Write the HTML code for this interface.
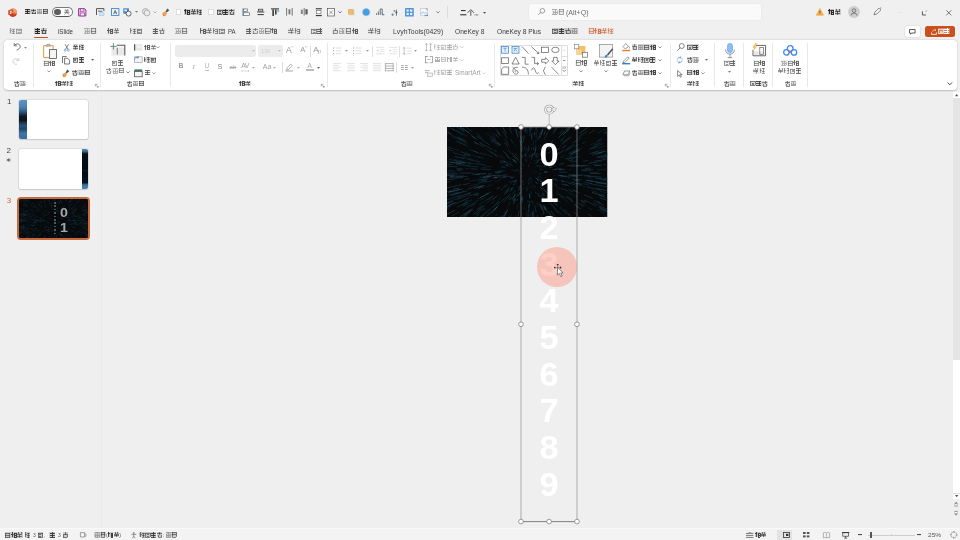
<!DOCTYPE html>
<html lang="zh-CN"><head><meta charset="utf-8"><title>PowerPoint</title>
<style>
html,body{margin:0;padding:0}
html{background:#f0f0f0;width:960px;height:540px;overflow:hidden}
body{width:960px;height:540px;overflow:hidden;position:relative;background:#f0f0f0;font-family:"Liberation Sans",sans-serif;font-size:6.5px;color:#3a3a3a}
div,span,svg,i{box-sizing:border-box}
.t{position:absolute;white-space:nowrap;line-height:1;display:block}
.ic{position:absolute;display:block;overflow:visible}
text{font-family:"Liberation Sans",sans-serif}
.bl{filter:blur(.4px)}
.vl{position:absolute;width:1px}
.k{display:inline-block;width:.94em;height:.94em;margin-right:.06em;vertical-align:-.12em;opacity:.82;background-repeat:no-repeat}
.k{background-color:rgba(60,60,60,.09)}
.bd .k{opacity:1;background-color:rgba(40,40,40,.2)}
.wh .k{background-color:rgba(255,255,255,.3)}
.g .k{background-color:rgba(120,120,120,.08)}
.or .k{background-color:rgba(201,88,31,.15)}
.g{color:#9a9a9a}
.lb{color:#383838}
.lb .k{opacity:.95;background-color:rgba(40,40,40,.16)}
.k.a{background-image:linear-gradient(currentColor,currentColor),linear-gradient(currentColor,currentColor),linear-gradient(currentColor,currentColor),linear-gradient(currentColor,currentColor);background-position:0.05em 0.1em,0.05em 0.44em,0.05em 0.8em,0.41em 0.05em;background-size:0.82em 0.15em,0.82em 0.15em,0.82em 0.15em,0.15em 0.85em}.k.b{background-image:linear-gradient(currentColor,currentColor),linear-gradient(currentColor,currentColor),linear-gradient(currentColor,currentColor),linear-gradient(currentColor,currentColor),linear-gradient(currentColor,currentColor);background-position:0.08em 0.08em,0.08em 0.78em,0.08em 0.08em,0.74em 0.08em,0.08em 0.42em;background-size:0.76em 0.1em,0.76em 0.1em,0.1em 0.8em,0.1em 0.8em,0.76em 0.1em}.k.c{background-image:linear-gradient(currentColor,currentColor),linear-gradient(currentColor,currentColor),linear-gradient(currentColor,currentColor),linear-gradient(currentColor,currentColor),linear-gradient(currentColor,currentColor),linear-gradient(currentColor,currentColor);background-position:0.05em 0.05em,0.05em 0.3em,0.45em 0.1em,0.45em 0.45em,0.45em 0.8em,0.62em 0.1em;background-size:0.1em 0.85em,0.3em 0.1em,0.45em 0.1em,0.45em 0.1em,0.45em 0.1em,0.1em 0.8em}.k.d{background-image:linear-gradient(currentColor,currentColor),linear-gradient(currentColor,currentColor),linear-gradient(currentColor,currentColor),linear-gradient(currentColor,currentColor),linear-gradient(currentColor,currentColor);background-position:0.05em 0.25em,0.42em 0.02em,0.15em 0.5em,0.7em 0.5em,0.15em 0.82em;background-size:0.85em 0.1em,0.1em 0.5em,0.1em 0.4em,0.1em 0.4em,0.65em 0.1em}.k.e{background-image:linear-gradient(currentColor,currentColor),linear-gradient(currentColor,currentColor),linear-gradient(currentColor,currentColor),linear-gradient(currentColor,currentColor),linear-gradient(currentColor,currentColor),linear-gradient(currentColor,currentColor),linear-gradient(currentColor,currentColor);background-position:0.12em 0.05em,0em 0.25em,0.5em 0.1em,0.5em 0.1em,0.78em 0.1em,0.5em 0.45em,0.5em 0.78em;background-size:0.15em 0.85em,0.42em 0.15em,0.42em 0.15em,0.15em 0.8em,0.15em 0.8em,0.42em 0.15em,0.42em 0.15em}.k.f{background-image:linear-gradient(currentColor,currentColor),linear-gradient(currentColor,currentColor),linear-gradient(currentColor,currentColor),linear-gradient(currentColor,currentColor),linear-gradient(currentColor,currentColor),linear-gradient(currentColor,currentColor);background-position:0.05em 0.15em,0.05em 0.15em,0.3em 0.4em,0.3em 0.62em,0.8em 0.15em,0.05em 0.8em;background-size:0.85em 0.1em,0.1em 0.7em,0.4em 0.1em,0.4em 0.1em,0.1em 0.7em,0.85em 0.1em}.k.g{background-image:linear-gradient(currentColor,currentColor),linear-gradient(currentColor,currentColor),linear-gradient(currentColor,currentColor),linear-gradient(currentColor,currentColor),linear-gradient(currentColor,currentColor),linear-gradient(currentColor,currentColor);background-position:0.05em 0.08em,0.42em 0.08em,0.1em 0.35em,0.72em 0.35em,0.1em 0.5em,0.05em 0.8em;background-size:0.85em 0.15em,0.15em 0.85em,0.15em 0.5em,0.15em 0.5em,0.77em 0.15em,0.85em 0.15em}.k.h{background-image:linear-gradient(currentColor,currentColor),linear-gradient(currentColor,currentColor),linear-gradient(currentColor,currentColor),linear-gradient(currentColor,currentColor),linear-gradient(currentColor,currentColor);background-position:0.05em 0.3em,0.25em 0.05em,0.62em 0.05em,0.05em 0.6em,0.42em 0.3em;background-size:0.85em 0.1em,0.1em 0.4em,0.1em 0.4em,0.85em 0.1em,0.1em 0.6em}
#titlebar{position:absolute;left:0;top:0;width:960px;height:24px}
#tabs{position:absolute;left:0;top:24px;width:960px;height:15px}
#ribbon{font-size:6.05px;position:absolute;left:4px;top:39.5px;width:952.5px;height:50.5px;background:#fff;border-radius:4px;box-shadow:0 .5px 2px rgba(0,0,0,.22)}
#thumbs{position:absolute;left:0;top:92px;width:101px;height:436px;background:#efefef}
#canvas{position:absolute;left:101px;top:92px;width:852px;height:436px;background:#efefef;overflow:hidden}
#vscroll{position:absolute;left:953px;top:92px;width:7px;height:436px;background:#efefef}
#status{position:absolute;left:0;top:528px;width:960px;height:12px;background:#f3f3f3;box-shadow:inset 0 1px 0 #f9f9f9;overflow:hidden}
</style></head><body>
<div id="titlebar" class="bl"><svg class="ic" style="left:7.5px;top:7.5px" width="9" height="9" viewBox="0 0 9 9" ><circle cx="5" cy="4.5" r="4" fill="#e8703f"/><path d="M5 .5A4 4 0 0 1 9 4.5H5Z" fill="#f5a27c"/><path d="M1.2 6.2A4 4 0 0 0 8.8 6.2Z" fill="#c43e1c"/><rect x=".3" y="2" width="5" height="5" rx=".8" fill="#c9421d"/><path d="M2 3.1H3.2A1 1 0 0 1 3.2 5.1H2.6V6M2.3 3.1V6" stroke="#fff" stroke-width=".7" fill="none"/></svg><span class="t bd" style="left:25.0px;top:8.6px;font-size:5.9px;color:#222" title="自动保存"><i class="k a"></i><i class="k d"></i><i class="k g"></i><i class="k b"></i></span><div style="position:absolute;left:52.0px;top:7.0px;width:20.5px;height:9.6px;border:.6px solid #7a7a7a;border-bottom-color:#555;border-radius:5px;background:#fdfdfd"><div style="position:absolute;left:1.4px;top:1px;width:6.4px;height:6.4px;border-radius:50%;background:#5e5e5e"></div></div><svg class="ic" style="left:63.8px;top:9.0px" width="5.6" height="5.8" viewBox="0 0 5.6 5.8" role="img" aria-label="关"><path d="M1.6 .2L2.2 1.4M4 .2L3.4 1.4M.6 1.8H5M.2 3.4H5.4M2.8 1.8V3.4L.6 5.6M2.8 3.4L5.2 5.6" fill="none" stroke="#444" stroke-width=".6"/></svg><svg class="ic" style="left:78.0px;top:8.0px" width="8.5" height="8.5" viewBox="0 0 8.5 8.5" ><path d="M.6 .6H6.6L7.9 1.9V7.9H.6Z" fill="#efc8ef" stroke="#8e3a94" stroke-width="1"/><rect x="2.3" y=".8" width="3.6" height="2.4" fill="#fbeefb" stroke="#8e3a94" stroke-width=".7"/><rect x="2.2" y="5" width="4.2" height="2.9" fill="#fbeefb" stroke="#8e3a94" stroke-width=".7"/></svg><svg class="ic" style="left:96.0px;top:8.4px" width="8.5" height="8" viewBox="0 0 8.5 8" ><path d="M.5 7V.6H7.9V3" fill="none" stroke="#444" stroke-width=".9"/><path d="M2 3.2H6.4" stroke="#444" stroke-width=".8"/><rect x="3.4" y="4.6" width="4.6" height="3" rx=".6" fill="#cfe6f8" stroke="#7fb5e2" stroke-width=".5"/></svg><svg class="ic" style="left:111.0px;top:8.2px" width="8.5" height="8" viewBox="0 0 8.5 8" ><rect x=".5" y=".6" width="7.4" height="6.8" fill="#eef6fc" stroke="#3c86c8" stroke-width=".9"/><path d="M2.6 6L4.2 2.3L5.8 6M3.2 4.8H5.2" stroke="#444" stroke-width=".7" fill="none"/></svg><svg class="ic" style="left:122.7px;top:8.0px" width="8.6" height="8.6" viewBox="0 0 8.6 8.6" ><rect x=".3" y=".3" width="5.6" height="5.4" fill="#3f86cf"/><rect x="1.4" y="1.4" width="2.6" height="2" fill="#dcebf8"/><circle cx="5.6" cy="5.6" r="2.5" fill="#f4f4f4" stroke="#444" stroke-width=".8"/></svg><svg class="ic" style="left:134.5px;top:11.4px" width="3" height="1.8" viewBox="0 0 3 1.8" ><path d="M0 0H3L1.5 1.8Z" fill="#777"/></svg><svg class="ic" style="left:142.0px;top:8.0px" width="8.5" height="8.5" viewBox="0 0 8.5 8.5" ><circle cx="3.4" cy="3.4" r="2.9" fill="#e4e4e4" stroke="#9a9a9a" stroke-width=".7"/><circle cx="5" cy="5" r="2.9" fill="#ececec" stroke="#9a9a9a" stroke-width=".7"/></svg><svg class="ic" style="left:152.5px;top:11.0px" width="4" height="2.6" viewBox="0 0 4 2.6" ><path d="M.4 .4 L2 2 L3.6 .4" fill="none" stroke="#999" stroke-width=".7"/></svg><svg class="ic" style="left:162.3px;top:7.8px" width="8" height="8.6" viewBox="0 0 8 8.6" ><path d="M5.4 .4L7.4 2.2L4.6 4.6L3.4 3.4Z" fill="#555"/><path d="M.3 5L3.2 3.4L5 5.2L3.4 8.2Z" fill="#f0a050"/><path d="M.3 5L3.4 8.2L1.2 8Z" fill="#e07a28"/></svg><div style="position:absolute;left:175.6px;top:8.8px;width:5.6px;height:6.2px;background:#fff;border:.5px solid #dcdcdc"></div><span class="t bd" style="left:184.3px;top:8.9px;font-size:6px;color:#222" title="对齐状"><i class="k e"></i><i class="k h"></i><i class="k c"></i></span><div style="position:absolute;left:208.0px;top:8.8px;width:5.6px;height:6.2px;background:#fff;border:.5px solid #dcdcdc"></div><span class="t bd" style="left:217.0px;top:8.9px;font-size:6px;color:#222" title="参考线"><i class="k f"></i><i class="k a"></i><i class="k d"></i></span><svg class="ic" style="left:242.0px;top:8.0px" width="8" height="8.5" viewBox="0 0 8 8.5" ><path d="M.7 .4V8.2" stroke="#5b9bd5" stroke-width=".8"/><rect x="1.6" y="1" width="4" height="2.6" fill="#fff" stroke="#444" stroke-width=".6"/><rect x="1.6" y="4.8" width="5.8" height="2.6" fill="#fff" stroke="#444" stroke-width=".6"/></svg><svg class="ic" style="left:257.0px;top:8.4px" width="7.4" height="8" viewBox="0 0 7.4 8" ><path d="M0 4H7.4" stroke="#333" stroke-width=".9"/><rect x="1.6" y="1.2" width="4.2" height="1.8" fill="none" stroke="#333" stroke-width=".7"/><path d="M.6 6.6H6.8" stroke="#333" stroke-width="1"/></svg><svg class="ic" style="left:270.6px;top:7.8px" width="8.6" height="8.6" viewBox="0 0 8.6 8.6" ><path d="M0 .9H8" stroke="#333" stroke-width="1.1"/><rect x="1.3" y="1.6" width="1.7" height="6.4" fill="#444"/><rect x="4" y="1.6" width="1.6" height="5" fill="#444"/><path d="M7.2 1.8V4.2M6.2 3H8.2" stroke="#4a90d9" stroke-width=".7"/></svg><svg class="ic" style="left:285.6px;top:8.4px" width="7" height="7.6" viewBox="0 0 7 7.6" ><path d="M.6 0V7.6M6.2 0V7.6" stroke="#555" stroke-width=".8"/><rect x="2.5" y="1.3" width="1.9" height="5" fill="#777"/></svg><svg class="ic" style="left:300.0px;top:8.4px" width="8.4" height="7.6" viewBox="0 0 8.4 7.6" ><path d="M4.2 0V7.6" stroke="#555" stroke-width=".8"/><rect x=".8" y="1.6" width="2" height="4.4" fill="#888"/><rect x="5.4" y="1.2" width="2.2" height="5.2" fill="#555"/></svg><svg class="ic" style="left:315.0px;top:8.0px" width="7.6" height="8.4" viewBox="0 0 7.6 8.4" ><path d="M.8 .8H6.8" stroke="#333" stroke-width="1.1"/><path d="M.8 7.6H6.8" stroke="#333" stroke-width="1.1"/><rect x="1.6" y="2.6" width="4.4" height="3.2" fill="#fff" stroke="#666" stroke-width=".6"/></svg><svg class="ic" style="left:327.0px;top:8.0px" width="8" height="8.4" viewBox="0 0 8 8.4" ><rect x=".4" y=".4" width="7.2" height="7.6" fill="#fafafa" stroke="#555" stroke-width=".7"/><path d="M2.2 6.4L5.8 2.4M2.6 2.8L5.6 6.2" stroke="#666" stroke-width=".6"/></svg><svg class="ic" style="left:337.6px;top:11.0px" width="4" height="2.6" viewBox="0 0 4 2.6" ><path d="M.4 .4 L2 2 L3.6 .4" fill="none" stroke="#444" stroke-width=".7"/></svg><svg class="ic" style="left:348.0px;top:9.0px" width="6.6" height="6.4" viewBox="0 0 6.6 6.4" ><rect x="1" y="1" width="5.4" height="5.2" fill="#c9ccd0"/><rect x="0" y="0" width="5.6" height="5.4" fill="#f0b869"/></svg><svg class="ic" style="left:362.0px;top:8.0px" width="8.4" height="8.4" viewBox="0 0 8.4 8.4" ><circle cx="4.2" cy="4.2" r="3.6" fill="#4a9be0" stroke="#8cc0ee" stroke-width=".8" stroke-dasharray="1 .6"/></svg><svg class="ic" style="left:375.6px;top:8.0px" width="8.6" height="8.4" viewBox="0 0 8.6 8.4" ><path d="M.6 7V5.2M2.4 7V3.4M4.2 7V1H6.2V6.6H8.2" fill="none" stroke="#555" stroke-width=".8"/><path d="M6.2 4V6.8H8.2" fill="none" stroke="#4a90d9" stroke-width=".8"/></svg><svg class="ic" style="left:391.0px;top:8.6px" width="7" height="7.4" viewBox="0 0 7 7.4" ><circle cx="1.6" cy="5.6" r="1.1" fill="#3f7fc4"/><circle cx="3.4" cy="2" r="1" fill="#e07a5a"/><path d="M5.4 .6V6.8" stroke="#3f7fc4" stroke-width=".9"/><circle cx="5.4" cy="3.6" r="1" fill="#555"/></svg><svg class="ic" style="left:405.0px;top:8.0px" width="8.8" height="8.6" viewBox="0 0 8.8 8.6" ><rect width="8.8" height="8.6" rx=".5" fill="#4e94d8"/><rect x="1.5" y="1.5" width="2.3" height="2.2" fill="#e8f1fb"/><rect x="5" y="1.5" width="2.3" height="2.2" fill="#e8f1fb"/><rect x="1.5" y="4.9" width="2.3" height="2.2" fill="#e8f1fb"/><rect x="5" y="4.9" width="2.3" height="2.2" fill="#e8f1fb"/></svg><svg class="ic" style="left:420.0px;top:8.0px" width="8.4" height="8.4" viewBox="0 0 8.4 8.4" ><rect x=".4" y=".6" width="7" height="6.6" fill="#f6f8fa" stroke="#b8c2cc" stroke-width=".6"/><path d="M1 6L3 3.8L4.6 5.4L5.8 4.4L7 5.6" fill="none" stroke="#7aa7d6" stroke-width=".7"/><path d="M5.6 .9H7.1V2.4" fill="none" stroke="#e8834a" stroke-width=".8"/><path d="M4.6 7.6H8M6.8 6.4L8 7.6" fill="none" stroke="#3f7fc4" stroke-width=".8"/></svg><svg class="ic" style="left:436.0px;top:11.4px" width="4" height="2.6" viewBox="0 0 4 2.6" ><path d="M.4 .4 L2 2 L3.6 .4" fill="none" stroke="#555" stroke-width=".7"/></svg><div class="vl" style="left:447.3px;top:6.0px;height:11.5px;background:#dcdcdc"></div><svg class="ic" style="left:460.0px;top:8.6px" width="19" height="7" viewBox="0 0 19 7" role="img" aria-label="二个..."><path d="M1 1.6H5.6M.2 5.8H6.4" stroke="#222" stroke-width="1"/><path d="M7.6 3.8L10.8 .6L14 3.8M10.8 2V6.8" fill="none" stroke="#444" stroke-width=".9"/><path d="M14.6 5.9H15.4M16 5.9H16.8M17.4 5.9H18.2" stroke="#333" stroke-width=".9"/></svg><svg class="ic" style="left:482.7px;top:11.8px" width="3" height="1.8" viewBox="0 0 3 1.8" ><path d="M0 0H3L1.5 1.8Z" fill="#444"/></svg><div style="position:absolute;left:529.0px;top:4.0px;width:232.0px;height:16.0px;background:#fafafa;border-radius:2.5px;box-shadow:0 0 0 .5px #e6e6e6"></div><svg class="ic" style="left:538.2px;top:8.4px" width="7.2" height="7.2" viewBox="0 0 7.2 7.2" ><circle cx="4.4" cy="2.8" r="2.3" fill="none" stroke="#777" stroke-width=".7"/><path d="M2.8 4.4L.4 6.8" stroke="#777" stroke-width=".8"/></svg><span class="t " style="left:552.0px;top:8.8px;font-size:6.4px;color:#666" title="搜索"><i class="k g"></i><i class="k b"></i></span><svg class="ic" style="left:565.8px;top:8.5px" width="23.5" height="8.5"><text x="0" y="5.85" textLength="22.5" lengthAdjust="spacingAndGlyphs" font-size="6.8" font-weight="normal" fill="#6a6a6a" >(Alt+Q)</text></svg><svg class="ic" style="left:815.6px;top:8.0px" width="7.8" height="7.8" viewBox="0 0 7.8 7.8" ><path d="M3.9 .5L7.5 7.2H.3Z" fill="#f6b44b" stroke="#e8922a" stroke-width=".5"/><path d="M3.9 2.8V5M3.9 5.7V6.4" stroke="#5a3a10" stroke-width=".8"/></svg><span class="t bd" style="left:828.3px;top:8.9px;font-size:6.4px;color:#222" title="登录"><i class="k e"></i><i class="k h"></i></span><svg class="ic" style="left:848.0px;top:6.2px" width="12" height="12" viewBox="0 0 12 12" ><circle cx="6" cy="6" r="5.9" fill="#cdcdcd"/><circle cx="6" cy="4.6" r="1.8" fill="none" stroke="#5a5a5a" stroke-width=".7"/><path d="M2.8 9.6A3.3 3.3 0 0 1 9.2 9.6" fill="none" stroke="#5a5a5a" stroke-width=".7"/></svg><svg class="ic" style="left:873.0px;top:7.4px" width="9" height="9" viewBox="0 0 9 9" ><path d="M1 7.8L2 5L6 1.2L7.8 3L3.8 7Z" fill="#fbfbfb" stroke="#555" stroke-width=".7"/><path d="M7.6 .4V1.8M6.9 1.1H8.3" stroke="#4a90d9" stroke-width=".5"/></svg><svg class="ic" style="left:897.5px;top:11.6px" width="5" height="1" viewBox="0 0 5 1" ><path d="M0 .5H5" stroke="#e6e6e6" stroke-width=".8"/></svg><svg class="ic" style="left:921.6px;top:9.8px" width="5.4" height="5.4" viewBox="0 0 5.4 5.4" ><path d="M.4 1.4V5H4" fill="none" stroke="#333" stroke-width=".8"/><path d="M3.6 1.8L5 .4" stroke="#555" stroke-width=".6"/></svg><svg class="ic" style="left:945.8px;top:9.6px" width="5.6" height="5.6" viewBox="0 0 5.6 5.6" ><path d="M.3 .3L5.3 5.3M5.3 .3L.3 5.3" stroke="#444" stroke-width=".7"/></svg></div>
<div id="tabs" class="bl"><span class="t " style="left:9.3px;top:3.9px;font-size:6.5px;color:#666" title="文件"><i class="k c"></i><i class="k f"></i></span><span class="t bd" style="left:34.2px;top:3.9px;font-size:6.5px;color:#222" title="开始"><i class="k a"></i><i class="k d"></i></span><div style="position:absolute;left:33.6px;top:12.6px;width:14.2px;height:1.1px;background:#c9501c;border-radius:.5px"></div><svg class="ic" style="left:58.0px;top:3.7px" width="16.0" height="8.8"><text x="0" y="6.02" textLength="15.0" lengthAdjust="spacingAndGlyphs" font-size="7" font-weight="normal" fill="#333" >iSlide</text></svg><span class="t " style="left:84.0px;top:3.9px;font-size:6.5px" title="插入"><i class="k g"></i><i class="k b"></i></span><span class="t " style="left:106.8px;top:3.9px;font-size:6.5px" title="绘图"><i class="k e"></i><i class="k h"></i></span><span class="t " style="left:129.8px;top:3.9px;font-size:6.5px" title="设计"><i class="k c"></i><i class="k f"></i></span><span class="t " style="left:152.3px;top:3.9px;font-size:6.5px" title="切换"><i class="k a"></i><i class="k d"></i></span><span class="t " style="left:175.0px;top:3.9px;font-size:6.5px" title="动画"><i class="k g"></i><i class="k b"></i></span><span class="t " style="left:199.6px;top:3.9px;font-size:6.5px" title="口袋动画"><i class="k e"></i><i class="k h"></i><i class="k c"></i><i class="k f"></i></span><svg class="ic" style="left:227.6px;top:3.7px" width="8.6" height="8.8"><text x="0" y="6.02" textLength="7.6" lengthAdjust="spacingAndGlyphs" font-size="7" font-weight="normal" fill="#3a3a3a" >PA</text></svg><span class="t " style="left:246.0px;top:3.9px;font-size:6.3px" title="幻灯片放映"><i class="k a"></i><i class="k d"></i><i class="k g"></i><i class="k b"></i><i class="k e"></i></span><span class="t " style="left:288.0px;top:3.9px;font-size:6.5px" title="审阅"><i class="k h"></i><i class="k c"></i></span><span class="t " style="left:310.6px;top:3.9px;font-size:6.5px" title="视图"><i class="k f"></i><i class="k a"></i></span><span class="t " style="left:332.3px;top:3.9px;font-size:6.5px" title="开发工具"><i class="k d"></i><i class="k g"></i><i class="k b"></i><i class="k e"></i></span><span class="t " style="left:368.0px;top:3.9px;font-size:6.5px" title="帮助"><i class="k h"></i><i class="k c"></i></span><svg class="ic" style="left:392.8px;top:3.7px" width="51.2" height="8.8"><text x="0" y="6.02" textLength="50.2" lengthAdjust="spacingAndGlyphs" font-size="7" font-weight="normal" fill="#3a3a3a" >LvyhTools(0429)</text></svg><svg class="ic" style="left:455.3px;top:3.7px" width="30.4" height="8.8"><text x="0" y="6.02" textLength="29.4" lengthAdjust="spacingAndGlyphs" font-size="7" font-weight="normal" fill="#3a3a3a" >OneKey 8</text></svg><svg class="ic" style="left:496.7px;top:3.7px" width="45.1" height="8.8"><text x="0" y="6.02" textLength="44.1" lengthAdjust="spacingAndGlyphs" font-size="7" font-weight="normal" fill="#3a3a3a" >OneKey 8 Plus</text></svg><span class="t bd" style="left:552.0px;top:3.9px;font-size:6.5px" title="百度网盘"><i class="k f"></i><i class="k a"></i><i class="k d"></i><i class="k g"></i></span><span class="t or" style="left:588.0px;top:3.9px;font-size:6.5px;color:#c9581f" title="图片格式"><i class="k b"></i><i class="k e"></i><i class="k h"></i><i class="k c"></i></span><div style="position:absolute;left:905.0px;top:1.8px;width:15.4px;height:11.4px;background:#fff;border-radius:2px;box-shadow:0 0 0 .5px #d8d8d8"></div><svg class="ic" style="left:909.3px;top:4.6px" width="6.6" height="6" viewBox="0 0 6.6 6" ><path d="M.5 .5H6.1V4H2.6L1.6 5.2V4H.5Z" fill="none" stroke="#333" stroke-width=".8"/></svg><div style="position:absolute;left:925.0px;top:1.8px;width:30.0px;height:11.6px;background:#c9501c;border-radius:2.5px"></div><svg class="ic" style="left:930.6px;top:4.8px" width="6" height="6" viewBox="0 0 6 6" ><path d="M.6 3.4V5.4H5.4V3.4" fill="none" stroke="#fff" stroke-width=".8"/><path d="M1.4 2.6C2 1.2 3.4 .8 4.6 1M3.8 .2L4.8 1L4 2" fill="none" stroke="#fff" stroke-width=".6"/></svg><span class="t bd wh" style="left:937.6px;top:4.1px;font-size:6.5px;color:#fff" title="共享"><i class="k f"></i><i class="k a"></i></span></div>
<div id="ribbon" class="bl"><svg class="ic" style="left:9.0px;top:2.9px" width="8.4" height="8.6" viewBox="0 0 8.4 8.6" ><path d="M1.2 1V3.8H4" fill="none" stroke="#555" stroke-width=".8"/><path d="M1.4 3.6C3 1 7.2 1.6 7.2 4.6C7.2 6.6 5.4 7.2 3.6 8.2" fill="none" stroke="#555" stroke-width=".8"/></svg><svg class="ic" style="left:19.9px;top:7.1px" width="3" height="1.8" viewBox="0 0 3 1.8" ><path d="M0 0H3L1.5 1.8Z" fill="#888"/></svg><svg class="ic" style="left:8.4px;top:17.1px" width="8" height="8" viewBox="0 0 8 8" ><path d="M6.8 1V3.6H4.2" fill="none" stroke="#bbb" stroke-width=".7"/><path d="M6.6 3.4C5.4 1 1 1.4 1 4.4C1 6.8 3.2 7.6 5 7.2" fill="none" stroke="#bbb" stroke-width=".7"/></svg><span class="t lb" style="left:10.0px;top:41.0px;font-size:6.1px" title="撤销"><i class="k d"></i><i class="k g"></i></span><div class="vl" style="left:28.7px;top:3.5px;height:44.0px;background:#e8e8e8"></div><svg class="ic" style="left:39.0px;top:4.9px" width="14" height="15.6" viewBox="0 0 14 15.6" ><rect x=".6" y="1.6" width="9.6" height="12" rx=".8" fill="#fff" stroke="#e8a44a" stroke-width="1.1"/><path d="M3.2 1.8C3.2 -.2 7.6 -.2 7.6 1.8" fill="none" stroke="#777" stroke-width=".8"/><rect x="3" y="1.4" width="4.8" height="1.4" fill="#ddd" stroke="#999" stroke-width=".4"/><rect x="6.6" y="5.6" width="6.8" height="9" fill="#f4f4f4" stroke="#555" stroke-width=".8"/></svg><span class="t " style="left:39.2px;top:20.9px;" title="粘贴"><i class="k b"></i><i class="k e"></i></span><svg class="ic" style="left:43.4px;top:30.5px" width="4" height="2.6" viewBox="0 0 4 2.6" ><path d="M.4 .4 L2 2 L3.6 .4" fill="none" stroke="#777" stroke-width=".7"/></svg><svg class="ic" style="left:60.0px;top:4.3px" width="5.6" height="7.6" viewBox="0 0 5.6 7.6" ><path d="M1 .2L4 5.2M4.6 .2L1.6 5.2" stroke="#555" stroke-width=".7"/><circle cx="1.2" cy="6.2" r="1" fill="none" stroke="#3f7fc4" stroke-width=".6"/><circle cx="4.4" cy="6.2" r="1" fill="none" stroke="#3f7fc4" stroke-width=".6"/></svg><span class="t bd" style="left:68.6px;top:4.8px;" title="剪切"><i class="k h"></i><i class="k c"></i></span><svg class="ic" style="left:58.0px;top:16.5px" width="8.4" height="8.4" viewBox="0 0 8.4 8.4" ><path d="M.5 7V.5H4.6" fill="none" stroke="#555" stroke-width=".8"/><path d="M2.6 2.2H5.6L7.6 4.2V8H2.6Z" fill="#fff" stroke="#555" stroke-width=".8"/></svg><span class="t bd" style="left:68.6px;top:17.2px;" title="复制"><i class="k f"></i><i class="k a"></i></span><svg class="ic" style="left:86.7px;top:19.9px" width="3" height="1.8" viewBox="0 0 3 1.8" ><path d="M0 0H3L1.5 1.8Z" fill="#555"/></svg><svg class="ic" style="left:58.4px;top:29.1px" width="8" height="8.6" viewBox="0 0 8 8.6" ><path d="M5.4 .4L7.4 2.2L4.6 4.6L3.4 3.4Z" fill="#555"/><path d="M.3 5L3.2 3.4L5 5.2L3.4 8.2Z" fill="#f0a050"/><path d="M.3 5L3.4 8.2L1.2 8Z" fill="#e07a28"/></svg><span class="t bd" style="left:68.2px;top:30.1px;" title="格式刷"><i class="k d"></i><i class="k g"></i><i class="k b"></i></span><span class="t lb" style="left:51.0px;top:41.0px;font-size:6.1px" title="剪贴板"><i class="k e"></i><i class="k h"></i><i class="k c"></i></span><svg class="ic" style="left:90.8px;top:44.5px" width="3.6" height="3.6" viewBox="0 0 3.6 3.6" ><path d="M.3 2.4V.3H2.4" fill="none" stroke="#777" stroke-width=".6"/><path d="M1.4 1.4L3.2 3.2M3.2 1.8V3.2H1.8" fill="none" stroke="#777" stroke-width=".6"/></svg><div class="vl" style="left:96.2px;top:3.5px;height:44.0px;background:#e8e8e8"></div><svg class="ic" style="left:105.8px;top:3.3px" width="15.6" height="13.6" viewBox="0 0 15.6 13.6" ><rect x="1.4" y="4" width="12.6" height="8.6" fill="#e9e9e9"/><path d="M6.6 2.2H14.8V12.4" fill="none" stroke="#555" stroke-width="1.1"/><path d="M7.3 4.6V11.6" stroke="#666" stroke-width=".8"/><path d="M1.6 4.2H14" stroke="#fff" stroke-width=".5"/><path d="M3.4 .2V6.6M.2 3.4H6.6" stroke="#3b7d5e" stroke-width=".8"/></svg><span class="t " style="left:107.6px;top:20.2px;" title="新建"><i class="k f"></i><i class="k a"></i></span><span class="t " style="left:102.2px;top:28.2px;" title="幻灯片"><i class="k d"></i><i class="k g"></i><i class="k b"></i></span><svg class="ic" style="left:121.6px;top:31.3px" width="4" height="2.6" viewBox="0 0 4 2.6" ><path d="M.4 .4 L2 2 L3.6 .4" fill="none" stroke="#555" stroke-width=".7"/></svg><svg class="ic" style="left:130.0px;top:4.5px" width="8.6" height="6.8" viewBox="0 0 8.6 6.8" ><rect x=".2" y=".2" width="8.2" height="6.4" fill="#e6e6e6"/><rect x="0" y=".2" width="1.2" height="6.4" fill="#555"/><rect x="2.6" y="1.4" width="4.8" height="2.4" fill="#f4f4f4"/></svg><span class="t " style="left:140.2px;top:4.8px;" title="版式"><i class="k e"></i><i class="k h"></i></span><svg class="ic" style="left:151.6px;top:6.9px" width="4" height="2.6" viewBox="0 0 4 2.6" ><path d="M.4 .4 L2 2 L3.6 .4" fill="none" stroke="#777" stroke-width=".7"/></svg><svg class="ic" style="left:130.0px;top:16.9px" width="8.6" height="7" viewBox="0 0 8.6 7" ><rect x=".4" y=".8" width="7.8" height="5.8" fill="#f2f2f2" stroke="#999" stroke-width=".6"/><path d="M.4 3.6C.6 1.4 2.6 .6 4 1.6M4.2 .2V1.8H2.6" fill="none" stroke="#2f7fd0" stroke-width=".8"/></svg><span class="t bd" style="left:140.2px;top:17.2px;" title="重置"><i class="k c"></i><i class="k f"></i></span><svg class="ic" style="left:130.0px;top:29.3px" width="8.6" height="8.4" viewBox="0 0 8.6 8.4" ><rect x=".4" y=".4" width="7.8" height="2" fill="#3e7a5c"/><rect x=".4" y="2.4" width="7.8" height="5.4" fill="#f4f4f4" stroke="#555" stroke-width=".8"/></svg><span class="t " style="left:141.0px;top:30.1px;" title="节"><i class="k a"></i></span><svg class="ic" style="left:148.2px;top:32.5px" width="4" height="2.6" viewBox="0 0 4 2.6" ><path d="M.4 .4 L2 2 L3.6 .4" fill="none" stroke="#777" stroke-width=".7"/></svg><span class="t lb" style="left:122.6px;top:41.0px;font-size:6.1px" title="幻灯片"><i class="k d"></i><i class="k g"></i><i class="k b"></i></span><div class="vl" style="left:166.2px;top:3.5px;height:44.0px;background:#e8e8e8"></div><div style="position:absolute;left:171.3px;top:5.5px;width:81.2px;height:11.8px;background:#ececec;border-radius:2px"></div><svg class="ic" style="left:247.7px;top:10.9px" width="3" height="1.8" viewBox="0 0 3 1.8" ><path d="M0 0H3L1.5 1.8Z" fill="#bdbdbd"/></svg><div style="position:absolute;left:254.4px;top:5.5px;width:24.2px;height:11.8px;background:#ececec;border-radius:2px"></div><svg class="ic" style="left:256.8px;top:8.3px" width="10.4" height="7.5"><text x="0" y="5.16" textLength="9.4" lengthAdjust="spacingAndGlyphs" font-size="6" font-weight="normal" fill="#d0d0d0" >136</text></svg><svg class="ic" style="left:273.7px;top:10.9px" width="3" height="1.8" viewBox="0 0 3 1.8" ><path d="M0 0H3L1.5 1.8Z" fill="#bdbdbd"/></svg><span class="t " style="left:282.0px;top:6.1px;font-size:8.6px;color:#999">A</span><svg class="ic" style="left:287.4px;top:6.5px" width="2.4" height="1.6" viewBox="0 0 2.4 1.6" ><path d="M0 1.4L1.2 .2L2.4 1.4" fill="none" stroke="#999" stroke-width=".5"/></svg><span class="t " style="left:296.2px;top:6.9px;font-size:7.6px;color:#999">A</span><svg class="ic" style="left:300.6px;top:6.7px" width="2.4" height="1.6" viewBox="0 0 2.4 1.6" ><path d="M0 .2L1.2 1.4L2.4 .2" fill="none" stroke="#999" stroke-width=".5"/></svg><div class="vl" style="left:305.9px;top:6.0px;height:11.0px;background:#dedede"></div><span class="t " style="left:309.2px;top:6.5px;font-size:8px;color:#999">A</span><span class="t " style="left:314.0px;top:8.9px;font-size:6px;color:#aaa">p</span><span class="t " style="left:174.6px;top:23.7px;font-size:6.8px;color:#9a9a9a;font-weight:bold">B</span><span class="t " style="left:188.6px;top:24.1px;font-size:6.8px;color:#a6a6a6;font-style:italic;font-family:'Liberation Serif',serif">I</span><span class="t " style="left:200.6px;top:23.7px;font-size:6.6px;color:#b0b0b0;border-bottom:.5px solid #c0c0c0;line-height:1.02">U</span><span class="t " style="left:213.4px;top:23.7px;font-size:7.4px;color:#888">S</span><span class="t " style="left:225.6px;top:24.9px;font-size:6px;color:#aaa;text-decoration:line-through">ab</span><span class="t " style="left:237.2px;top:23.1px;font-size:6.8px;color:#a0a0a0;letter-spacing:-.4px">AV</span><svg class="ic" style="left:237.4px;top:30.1px" width="8.4" height="2" viewBox="0 0 8.4 2" ><path d="M.4 1H8M.4 1L1.4 .2M.4 1L1.4 1.8M8 1L7 .2M8 1L7 1.8" fill="none" stroke="#a8a8a8" stroke-width=".4"/></svg><svg class="ic" style="left:248.1px;top:27.3px" width="3" height="1.8" viewBox="0 0 3 1.8" ><path d="M0 0H3L1.5 1.8Z" fill="#aaa"/></svg><span class="t " style="left:258.8px;top:23.7px;font-size:7px;color:#a4a4a4">Aa</span><svg class="ic" style="left:269.3px;top:27.3px" width="3" height="1.8" viewBox="0 0 3 1.8" ><path d="M0 0H3L1.5 1.8Z" fill="#aaa"/></svg><div class="vl" style="left:277.7px;top:22.5px;height:10.5px;background:#dedede"></div><svg class="ic" style="left:281.4px;top:23.3px" width="8.4" height="8.6" viewBox="0 0 8.4 8.6" ><path d="M1.6 5.6L5.6 1L7.2 2.4L3.2 7Z" fill="none" stroke="#999" stroke-width=".7"/><path d="M1.6 5.6L1.2 7.2L3.2 7" fill="none" stroke="#999" stroke-width=".6"/><rect x=".4" y="7.4" width="7.6" height="1.2" fill="#b8b8b8"/></svg><svg class="ic" style="left:293.1px;top:27.3px" width="3" height="1.8" viewBox="0 0 3 1.8" ><path d="M0 0H3L1.5 1.8Z" fill="#aaa"/></svg><span class="t " style="left:303.6px;top:23.3px;font-size:6.4px;color:#a4a4a4">A</span><div style="position:absolute;left:302.0px;top:29.4px;width:8.0px;height:2.0px;background:#bdbdbd"></div><svg class="ic" style="left:313.1px;top:27.3px" width="3" height="1.8" viewBox="0 0 3 1.8" ><path d="M0 0H3L1.5 1.8Z" fill="#555"/></svg><span class="t lb" style="left:235.0px;top:41.0px;font-size:6.1px" title="字体"><i class="k e"></i><i class="k h"></i></span><svg class="ic" style="left:317.4px;top:44.5px" width="3.6" height="3.6" viewBox="0 0 3.6 3.6" ><path d="M.3 2.4V.3H2.4" fill="none" stroke="#777" stroke-width=".6"/><path d="M1.4 1.4L3.2 3.2M3.2 1.8V3.2H1.8" fill="none" stroke="#777" stroke-width=".6"/></svg><div class="vl" style="left:323.0px;top:3.5px;height:44.0px;background:#e8e8e8"></div><svg class="ic" style="left:329.0px;top:7.7px" width="8.6" height="7.6" viewBox="0 0 8.6 7.6" ><path d="M2.6 1H8.4M2.6 3.8H8.4M2.6 6.6H8.4" stroke="#c9c9c9" stroke-width=".6"/><path d="M.6 .4V1.6M.6 3.2V4.4M.6 6V7.2" stroke="#999" stroke-width=".9"/></svg><svg class="ic" style="left:341.3px;top:10.9px" width="3" height="1.8" viewBox="0 0 3 1.8" ><path d="M0 0H3L1.5 1.8Z" fill="#999"/></svg><svg class="ic" style="left:349.4px;top:7.7px" width="8.6" height="7.6" viewBox="0 0 8.6 7.6" ><path d="M2.6 1H8.4M2.6 3.8H8.4M2.6 6.6H8.4" stroke="#c9c9c9" stroke-width=".6"/><path d="M.6 .4V1.6M.6 3.2V4.4M.6 6V7.2" stroke="#999" stroke-width=".9"/></svg><svg class="ic" style="left:361.7px;top:10.9px" width="3" height="1.8" viewBox="0 0 3 1.8" ><path d="M0 0H3L1.5 1.8Z" fill="#999"/></svg><div class="vl" style="left:367.6px;top:6.0px;height:11.0px;background:#e0e0e0"></div><svg class="ic" style="left:371.8px;top:7.9px" width="8.4" height="7.2" viewBox="0 0 8.4 7.2" ><path d="M0 .4H8.4M3.6 2.6H8.4M3.6 4.6H8.4M0 6.8H8.4" stroke="#d4d4d4" stroke-width=".6"/><path d="M2.2 2.6L.6 3.6L2.2 4.6Z" fill="#bbb"/></svg><svg class="ic" style="left:385.0px;top:7.9px" width="8.4" height="7.2" viewBox="0 0 8.4 7.2" ><path d="M0 .4H8.4M3.6 2.6H8.4M3.6 4.6H8.4M0 6.8H8.4" stroke="#d4d4d4" stroke-width=".6"/><path d="M.6 2.6L2.2 3.6L.6 4.6Z" fill="#bbb"/></svg><div class="vl" style="left:395.4px;top:6.0px;height:11.0px;background:#e0e0e0"></div><svg class="ic" style="left:398.6px;top:7.5px" width="8.8" height="8" viewBox="0 0 8.8 8" ><path d="M3.6 1.2H8.8M3.6 4H8.8M3.6 6.8H8.8" stroke="#cfcfcf" stroke-width=".6"/><path d="M1.2 .4V7.6M.2 1.6L1.2 .4L2.2 1.6M.2 6.4L1.2 7.6L2.2 6.4" fill="none" stroke="#999" stroke-width=".6"/></svg><svg class="ic" style="left:409.9px;top:10.9px" width="3" height="1.8" viewBox="0 0 3 1.8" ><path d="M0 0H3L1.5 1.8Z" fill="#999"/></svg><svg class="ic" style="left:329.3px;top:23.9px" width="8" height="7.6" viewBox="0 0 8 7.6" ><path d="M0 0.5H8M0 2.3H5.6M0 4.1H8M0 5.9H5.6M0 7.7H8" stroke="#d2d2d2" stroke-width="0.6"/></svg><svg class="ic" style="left:342.7px;top:23.9px" width="8" height="7.6" viewBox="0 0 8 7.6" ><path d="M0 0.5H8M1.2 2.3H6.8M0 4.1H8M1.2 5.9H6.8M0 7.7H8" stroke="#d2d2d2" stroke-width="0.6"/></svg><svg class="ic" style="left:356.0px;top:23.9px" width="8" height="7.6" viewBox="0 0 8 7.6" ><path d="M0 0.5H8M2.4 2.3H8M0 4.1H8M2.4 5.9H8M0 7.7H8" stroke="#d2d2d2" stroke-width="0.6"/></svg><svg class="ic" style="left:368.8px;top:23.9px" width="8" height="7.6" viewBox="0 0 8 7.6" ><path d="M0 0.5H8M0 2.3H8M0 4.1H8M0 5.9H8M0 7.7H8" stroke="#d2d2d2" stroke-width="0.6"/></svg><svg class="ic" style="left:381.0px;top:23.3px" width="8.6" height="8.8" viewBox="0 0 8.6 8.8" ><path d="M0 .6H8.6M0 3H8.6M0 5.4H8.6M0 7.8H8.6" stroke="#777" stroke-width=".55"/><path d="M.4 .6V8M8.2 .6V8" stroke="#777" stroke-width=".5"/></svg><div class="vl" style="left:391.8px;top:22.5px;height:10.5px;background:#e0e0e0"></div><svg class="ic" style="left:396.8px;top:25.1px" width="6.8" height="5" viewBox="0 0 6.8 5" ><path d="M0 .6H2.8M4 .6H6.8M0 2.5H2.8M4 2.5H6.8M0 4.4H2.8M4 4.4H6.8" stroke="#888" stroke-width=".7"/></svg><svg class="ic" style="left:406.7px;top:27.3px" width="3" height="1.8" viewBox="0 0 3 1.8" ><path d="M0 0H3L1.5 1.8Z" fill="#999"/></svg><svg class="ic" style="left:421.2px;top:3.5px" width="7" height="8.6" viewBox="0 0 7 8.6" ><path d="M1.4 .6V8M.2 1.8L1.4 .4L2.6 1.8M.2 6.8L1.4 8.2L2.6 6.8" fill="none" stroke="#999" stroke-width=".6"/><path d="M4.4 1H6.8M5.6 1V7.6M4.6 7.6H6.6" fill="none" stroke="#888" stroke-width=".6"/></svg><span class="t g" style="left:430.2px;top:4.6px;" title="文字方向"><i class="k c"></i><i class="k f"></i><i class="k a"></i><i class="k d"></i></span><svg class="ic" style="left:455.8px;top:6.9px" width="4" height="2.6" viewBox="0 0 4 2.6" ><path d="M.4 .4 L2 2 L3.6 .4" fill="none" stroke="#bbb" stroke-width=".7"/></svg><svg class="ic" style="left:420.6px;top:16.7px" width="8" height="7.2" viewBox="0 0 8 7.2" ><rect x=".4" y=".4" width="7.2" height="6.4" fill="none" stroke="#8a8a8a" stroke-width=".7"/><path d="M4 -.4V1.8M4 5.4V7.6" stroke="#fff" stroke-width="1.6"/><path d="M2.2 3.6H5.8" stroke="#999" stroke-width=".6"/></svg><span class="t g" style="left:430.6px;top:17.0px;" title="对齐文本"><i class="k g"></i><i class="k b"></i><i class="k e"></i><i class="k h"></i></span><svg class="ic" style="left:456.0px;top:19.5px" width="4" height="2.6" viewBox="0 0 4 2.6" ><path d="M.4 .4 L2 2 L3.6 .4" fill="none" stroke="#bbb" stroke-width=".7"/></svg><svg class="ic" style="left:420.8px;top:30.3px" width="7.6" height="6.6" viewBox="0 0 7.6 6.6" ><path d="M0 .6H4.6M0 2.4H3" stroke="#999" stroke-width=".7"/><rect x="2.6" y="3" width="4.8" height="3.4" fill="#f4f4f4" stroke="#aaa" stroke-width=".6"/></svg><span class="t g" style="left:430.2px;top:29.9px;" title="转换为"><i class="k c"></i><i class="k f"></i><i class="k a"></i></span><svg class="ic" style="left:451.0px;top:29.6px" width="26.6" height="8.6"><text x="0" y="5.93" textLength="25.6" lengthAdjust="spacingAndGlyphs" font-size="6.9" font-weight="normal" fill="#a2a2a2" >SmartArt</text></svg><svg class="ic" style="left:478.0px;top:32.7px" width="4" height="2.6" viewBox="0 0 4 2.6" ><path d="M.4 .4 L2 2 L3.6 .4" fill="none" stroke="#ccc" stroke-width=".7"/></svg><span class="t lb" style="left:396.8px;top:41.0px;font-size:6.1px" title="段落"><i class="k d"></i><i class="k g"></i></span><svg class="ic" style="left:484.6px;top:44.5px" width="3.6" height="3.6" viewBox="0 0 3.6 3.6" ><path d="M.3 2.4V.3H2.4" fill="none" stroke="#777" stroke-width=".6"/><path d="M1.4 1.4L3.2 3.2M3.2 1.8V3.2H1.8" fill="none" stroke="#777" stroke-width=".6"/></svg><div class="vl" style="left:490.2px;top:3.5px;height:44.0px;background:#e8e8e8"></div><div style="position:absolute;left:495.6px;top:5.9px;width:68.0px;height:30.8px;border:.6px solid #dcdcdc;background:#fff;border-radius:1px"><div style="position:absolute;left:60.6px;top:0;width:.6px;height:100%;background:#dedede"></div><div style="position:absolute;left:60.6px;top:10px;width:7px;height:.6px;background:#dedede"></div><div style="position:absolute;left:60.6px;top:20px;width:7px;height:.6px;background:#dedede"></div></div><svg class="ic" style="left:495.8px;top:5.9px" width="60" height="31" viewBox="0 0 60 31" ><rect x="1.6" y="1.6" width="7" height="6.6" fill="#e6f0fa" stroke="#2f7fd0" stroke-width=".7"/><path d="M3.4 3.2H6.8M5.1 3.2V6.6" stroke="#2f7fd0" stroke-width=".6"/><rect x="12" y="1.6" width="7" height="6.6" fill="#e6f0fa" stroke="#2f7fd0" stroke-width=".7"/><path d="M13.6 3.4H17.4M15.4 3.4L14.2 6.2M15.6 4.6L17 6.4" stroke="#2f7fd0" stroke-width=".6"/><path d="M22 1.6L28.4 8.4" fill="none" stroke="#555" stroke-width=".7"/><path d="M31.4 1.6L38.6 8.4M38.8 6.6V8.6H36.8" fill="none" stroke="#555" stroke-width=".7"/><rect x="41.4" y="2.2" width="7.2" height="5.4" fill="none" stroke="#555" stroke-width=".7"/><ellipse cx="55.4" cy="4.9" rx="3.7" ry="2.7" fill="none" stroke="#555" stroke-width=".7"/><rect x="1.6" y="12.8" width="7" height="5.8" fill="none" stroke="#555" stroke-width=".7"/><path d="M15.6 12.2L19.2 19H12Z" fill="none" stroke="#555" stroke-width=".7"/><path d="M22 12.4H25.2V19.2H28.6" fill="none" stroke="#555" stroke-width=".7"/><path d="M31.6 12.4H34.6V18.6H38.4M37 17.2L38.6 18.6L37 20" fill="none" stroke="#555" stroke-width=".7"/><path d="M41.6 14.4H45.4V12.6L48.8 15.8L45.4 19V17.2H41.6Z" fill="none" stroke="#555" stroke-width=".7"/><path d="M53.6 12.4H57.2V16H59L55.4 19.6L51.8 16H53.6Z" fill="none" stroke="#555" stroke-width=".7"/><path d="M1.6 24.2L3.6 22H8.6V29.4H1.6Z" fill="none" stroke="#555" stroke-width=".7"/><path d="M17.8 22.4C13 21.6 11.4 26.6 14.6 28.8C17 30 19 28 17.6 26.2C16.4 25 14.6 26 15.4 27.2M12.6 22.2L16 25.4" fill="none" stroke="#555" stroke-width=".7"/><path d="M22 22.2C26 22 28.4 24.6 28.4 29.4" fill="none" stroke="#555" stroke-width=".7"/><path d="M31.6 25.4C32.6 22 34.4 22 35.2 25.4C36 29 37.8 29.2 38.6 27.4" fill="none" stroke="#555" stroke-width=".7"/><path d="M45.6 22C44 22 44.6 25.6 43.2 25.8C44.6 26 44 29.6 45.6 29.6" fill="none" stroke="#555" stroke-width=".7"/><path d="M51.6 22.2L58.6 29.4" fill="none" stroke="#555" stroke-width=".7"/></svg><svg class="ic" style="left:558.4px;top:9.5px" width="4" height="2.6" viewBox="0 0 4 2.6" ><path d="M.4 2.2 L2 .6 L3.6 2.2" fill="none" stroke="#ccc" stroke-width=".7"/></svg><svg class="ic" style="left:559.2px;top:20.9px" width="2.4" height="1" viewBox="0 0 2.4 1" ><path d="M0 .5H2.4" stroke="#666" stroke-width=".7"/></svg><svg class="ic" style="left:558.2px;top:28.9px" width="4.4" height="4.4" viewBox="0 0 4.4 4.4" ><path d="M.4 0H4" stroke="#666" stroke-width=".6"/><path d="M.4 1.8L2.2 3.6L4 1.8" fill="none" stroke="#666" stroke-width=".7"/></svg><svg class="ic" style="left:570.0px;top:4.5px" width="14" height="13.8" viewBox="0 0 14 13.8" ><rect x="2.4" y="2" width="9" height="8.8" fill="#f4be6a"/><path d="M2.4 5.4H7.4V10.8H2.4Z" fill="#f9d595"/><rect x=".4" y=".4" width="4.4" height="4.4" fill="#fff" stroke="#777" stroke-width=".6"/><rect x="8.6" y="8.4" width="4.8" height="4.8" fill="#fff" stroke="#666" stroke-width=".7"/></svg><span class="t " style="left:571.2px;top:20.3px;" title="排列"><i class="k b"></i><i class="k e"></i></span><svg class="ic" style="left:575.4px;top:30.5px" width="4" height="2.6" viewBox="0 0 4 2.6" ><path d="M.4 .4 L2 2 L3.6 .4" fill="none" stroke="#666" stroke-width=".7"/></svg><svg class="ic" style="left:594.6px;top:4.7px" width="15" height="14" viewBox="0 0 15 14" ><rect x=".5" y=".5" width="13" height="12.6" fill="#f4f4f4" stroke="#8a8a8a" stroke-width=".7"/><path d="M14.4 5.2L9.2 11.4L7.8 10.4L13.2 4.2Z" fill="#5a5a5a"/><path d="M5.6 13.6C5.6 11 7.6 10 8.8 11.6C8.6 13.4 7.2 13.8 5.6 13.6Z" fill="#3f86cf"/></svg><span class="t " style="left:589.6px;top:20.3px;font-size:6px" title="快速样式"><i class="k h"></i><i class="k c"></i><i class="k f"></i><i class="k a"></i></span><svg class="ic" style="left:599.8px;top:30.5px" width="4" height="2.6" viewBox="0 0 4 2.6" ><path d="M.4 .4 L2 2 L3.6 .4" fill="none" stroke="#666" stroke-width=".7"/></svg><svg class="ic" style="left:618.0px;top:3.9px" width="8.6" height="8.4" viewBox="0 0 8.6 8.4" ><path d="M3.8 .6L6.6 3.4L3.4 6L1 3.6Z" fill="#fff" stroke="#555" stroke-width=".6"/><path d="M7 3.6C7.8 4.8 7.8 5.4 7 5.6" fill="none" stroke="#555" stroke-width=".5"/><rect x=".2" y="6.8" width="8" height="1.5" fill="#e8813a"/></svg><span class="t bd" style="left:627.8px;top:4.8px;" title="形状填充"><i class="k d"></i><i class="k g"></i><i class="k b"></i><i class="k e"></i></span><svg class="ic" style="left:653.8px;top:6.9px" width="4" height="2.6" viewBox="0 0 4 2.6" ><path d="M.4 .4 L2 2 L3.6 .4" fill="none" stroke="#666" stroke-width=".7"/></svg><svg class="ic" style="left:618.0px;top:16.5px" width="8.6" height="8.4" viewBox="0 0 8.6 8.4" ><path d="M1.4 5.2L5.8 .8L7.2 2.2L2.8 6.4L1 6.8Z" fill="#fff" stroke="#555" stroke-width=".6"/><rect x=".2" y="7" width="8" height="1.4" fill="#2f7fd0"/></svg><span class="t bd" style="left:627.8px;top:17.2px;" title="形状轮廓"><i class="k h"></i><i class="k c"></i><i class="k f"></i><i class="k a"></i></span><svg class="ic" style="left:653.8px;top:19.5px" width="4" height="2.6" viewBox="0 0 4 2.6" ><path d="M.4 .4 L2 2 L3.6 .4" fill="none" stroke="#666" stroke-width=".7"/></svg><svg class="ic" style="left:618.0px;top:30.3px" width="8.6" height="6.6" viewBox="0 0 8.6 6.6" ><path d="M2.6 1H7.8L6 4.8H.8Z" fill="#fff" stroke="#555" stroke-width=".6"/><path d="M2 5.8H6.8L8.2 2.6" fill="none" stroke="#777" stroke-width=".6"/></svg><span class="t bd" style="left:627.8px;top:30.1px;" title="形状效果"><i class="k d"></i><i class="k g"></i><i class="k b"></i><i class="k e"></i></span><svg class="ic" style="left:653.8px;top:32.5px" width="4" height="2.6" viewBox="0 0 4 2.6" ><path d="M.4 .4 L2 2 L3.6 .4" fill="none" stroke="#666" stroke-width=".7"/></svg><span class="t lb" style="left:568.4px;top:41.0px;font-size:6.1px" title="绘图"><i class="k h"></i><i class="k c"></i></span><svg class="ic" style="left:660.8px;top:44.5px" width="3.6" height="3.6" viewBox="0 0 3.6 3.6" ><path d="M.3 2.4V.3H2.4" fill="none" stroke="#777" stroke-width=".6"/><path d="M1.4 1.4L3.2 3.2M3.2 1.8V3.2H1.8" fill="none" stroke="#777" stroke-width=".6"/></svg><div class="vl" style="left:666.0px;top:3.5px;height:44.0px;background:#e8e8e8"></div><svg class="ic" style="left:673.0px;top:3.7px" width="8" height="8" viewBox="0 0 8 8" ><circle cx="4.8" cy="3" r="2.5" fill="none" stroke="#555" stroke-width=".7"/><path d="M3 4.8L.4 7.6" stroke="#555" stroke-width=".8"/></svg><span class="t bd" style="left:683.0px;top:4.8px;" title="查找"><i class="k f"></i><i class="k a"></i></span><svg class="ic" style="left:672.4px;top:16.7px" width="8" height="8" viewBox="0 0 8 8" ><path d="M1.6 3.4C1.6 1.6 3.4 .8 4.8 1.8M4.8 .4V2H3.4" fill="none" stroke="#4a90d9" stroke-width=".7"/><path d="M6 4.4C6 6.2 4.2 7 2.8 6M2.8 7.6V6H4.2" fill="none" stroke="#4a90d9" stroke-width=".7"/><path d="M5.2 3H7.4M.4 5H2.4" stroke="#999" stroke-width=".6"/></svg><span class="t bd" style="left:683.0px;top:17.2px;" title="替换"><i class="k d"></i><i class="k g"></i></span><svg class="ic" style="left:700.9px;top:19.9px" width="3" height="1.8" viewBox="0 0 3 1.8" ><path d="M0 0H3L1.5 1.8Z" fill="#666"/></svg><svg class="ic" style="left:673.0px;top:30.1px" width="6" height="7.6" viewBox="0 0 6 7.6" ><path d="M.6 .6V6.4L2.2 5L3.4 7.2L4.4 6.6L3.2 4.6H5.2Z" fill="#fff" stroke="#555" stroke-width=".7"/></svg><span class="t bd" style="left:683.0px;top:30.1px;" title="选择"><i class="k b"></i><i class="k e"></i></span><svg class="ic" style="left:696.6px;top:32.7px" width="4" height="2.6" viewBox="0 0 4 2.6" ><path d="M.4 .4 L2 2 L3.6 .4" fill="none" stroke="#666" stroke-width=".7"/></svg><span class="t lb" style="left:683.0px;top:41.0px;font-size:6.1px" title="编辑"><i class="k h"></i><i class="k c"></i></span><div class="vl" style="left:710.2px;top:3.5px;height:44.0px;background:#e8e8e8"></div><svg class="ic" style="left:720.6px;top:3.5px" width="10" height="15.4" viewBox="0 0 10 15.4" ><rect x="2.5" y=".4" width="5" height="9.2" rx="2.5" fill="#8fbdf0" stroke="#5b9be2" stroke-width=".6"/><path d="M.6 6.6C.6 12.6 9.4 12.6 9.4 6.6M5 11.2V14.4M2.8 14.6H7.2" fill="none" stroke="#5a6a7a" stroke-width=".7"/></svg><span class="t " style="left:720.0px;top:20.5px;" title="听写"><i class="k f"></i><i class="k a"></i></span><svg class="ic" style="left:724.3px;top:31.1px" width="3" height="1.8" viewBox="0 0 3 1.8" ><path d="M0 0H3L1.5 1.8Z" fill="#777"/></svg><span class="t lb" style="left:719.8px;top:41.0px;font-size:6.1px" title="语音"><i class="k d"></i><i class="k g"></i></span><div class="vl" style="left:738.8px;top:3.5px;height:44.0px;background:#e8e8e8"></div><svg class="ic" style="left:747.0px;top:3.7px" width="15.4" height="13.6" viewBox="0 0 15.4 13.6" ><path d="M5 2.4H14.6V12.8H2V7" fill="none" stroke="#555" stroke-width=".9"/><rect x="3" y="8.4" width="10.6" height="3.4" fill="#e6e6e6"/><rect x="8.8" y="4.4" width="3.8" height="7" fill="none" stroke="#666" stroke-width=".7"/><path d="M4.6 0L1.4 4.6H3.4L1.6 8.8L6 3.4H3.8L6 0Z" fill="#f2b54a"/></svg><span class="t " style="left:749.2px;top:20.5px;" title="设计"><i class="k b"></i><i class="k e"></i></span><span class="t " style="left:749.2px;top:28.3px;" title="灵感"><i class="k h"></i><i class="k c"></i></span><span class="t lb" style="left:746.0px;top:41.0px;font-size:6.1px" title="设计器"><i class="k f"></i><i class="k a"></i><i class="k d"></i></span><div class="vl" style="left:768.0px;top:3.5px;height:44.0px;background:#e8e8e8"></div><svg class="ic" style="left:779.4px;top:5.1px" width="14.4" height="11.4" viewBox="0 0 14.4 11.4" ><circle cx="7.2" cy="3.6" r="2.9" fill="none" stroke="#3b8bea" stroke-width="1.3"/><circle cx="3.4" cy="7.4" r="2.7" fill="none" stroke="#3b8bea" stroke-width="1.3"/><circle cx="11" cy="7.4" r="2.7" fill="none" stroke="#3b8bea" stroke-width="1.3"/><circle cx="7.2" cy="6.8" r="1.1" fill="#e8533a"/></svg><span class="t " style="left:777.2px;top:20.5px;" title="保存到"><i class="k g"></i><i class="k b"></i><i class="k e"></i></span><span class="t " style="left:774.0px;top:28.3px;font-size:5.9px" title="百度网盘"><i class="k h"></i><i class="k c"></i><i class="k f"></i><i class="k a"></i></span><span class="t lb" style="left:780.6px;top:41.0px;font-size:6.1px" title="保存"><i class="k d"></i><i class="k g"></i></span><div class="vl" style="left:803.0px;top:3.5px;height:44.0px;background:#e8e8e8"></div><svg class="ic" style="left:942.6px;top:42.2px" width="5.6" height="3.64" viewBox="0 0 4 2.6" ><path d="M.4 .4 L2 2 L3.6 .4" fill="none" stroke="#444" stroke-width=".7"/></svg></div>
<svg width="0" height="0" style="position:absolute"><defs><symbol id="sb" viewBox="0 0 160 90" preserveAspectRatio="none"><rect width="160" height="90" fill="#07090b"/><path d="M140.5 50.7L144.1 51.0M9.3 45.1L-1.2 45.1M69.6 4.9L68.5 0.8M87.1 8.3L87.6 5.7M157.2 27.4L162.8 26.1M92.3 53.7L95.3 55.9M93.8 6.8L97.1 -2.7M2.8 5.7L-3.8 2.3M150.4 -0.3L157.5 -4.9M51.7 19.8L44.4 13.4M117.5 48.9L123.1 49.5M101.2 86.5L104.9 93.9M43.6 2.5L35.8 -6.4M89.8 30.0L92.0 26.5M13.2 46.2L-3.6 46.5M120.6 47.9L128.7 48.4M75.9 71.8L75.2 76.0M152.8 64.3L165.3 67.6M140.8 36.4L154.2 34.4M153.3 -1.2L162.2 -6.9M100.7 83.4L105.2 92.0M91.9 76.1L94.2 82.5M77.8 23.0L77.4 19.1M44.7 80.5L38.8 86.4M103.4 70.6L108.3 76.1M7.5 43.7L1.0 43.6M58.0 34.6L55.7 33.6M147.2 54.6L161.2 56.7M149.7 42.9L165.3 42.4M15.5 34.0L7.1 32.5M72.2 6.1L71.8 4.0M84.4 58.1L85.2 60.6M13.5 70.2L3.6 73.9M89.1 36.8L90.0 36.0M48.7 10.7L43.7 5.3M84.2 13.5L84.8 8.8M125.9 20.4L131.8 17.1M108.7 59.6L114.3 62.5M-1.5 23.6L-15.4 20.0M149.2 30.3L164.6 27.0M2.9 21.5L-2.1 20.0M90.2 38.8L91.2 38.1M85.2 73.5L85.8 76.9M94.8 66.6L96.6 69.4M70.6 0.5L68.6 -8.5M37.0 88.0L32.0 92.9M24.8 89.8L19.0 94.5M73.4 2.5L71.8 -7.4M108.4 62.7L110.9 64.3M48.1 73.3L43.4 77.3M59.0 83.4L54.9 90.9M37.6 31.6L30.7 29.4M144.8 21.8L150.6 19.7M58.8 50.1L52.8 51.6M98.1 10.2L102.6 1.5M110.7 48.1L115.5 48.6M73.1 35.9L71.4 33.8M29.1 36.9L16.3 34.8M83.3 85.6L83.7 91.3M114.6 7.0L122.4 -1.6M85.5 43.4L86.4 43.1M44.3 72.3L37.8 77.2M64.4 50.8L62.5 51.5M73.1 15.9L72.4 13.1M143.9 63.6L150.9 65.6M81.5 83.1L81.7 89.8M85.5 18.7L86.4 13.6M89.3 12.0L90.1 9.1M92.3 20.2L93.6 17.4M127.0 63.8L133.0 66.2M113.9 53.4L122.3 55.5M49.3 69.9L44.7 73.5M128.4 57.2L137.7 59.6M106.7 5.4L112.6 -3.4M64.0 68.5L61.1 72.7M89.6 75.5L91.1 80.3M100.6 21.6L103.4 18.3M64.0 2.2L62.1 -2.6M72.4 8.7L71.4 3.9M66.6 43.3L64.3 43.0M104.9 51.4L109.6 52.6M60.9 92.4L57.6 100.5M40.7 71.9L31.2 78.4M68.9 87.7L67.8 91.9M117.2 69.3L122.5 72.8M128.4 52.0L134.7 52.9M38.8 53.2L34.3 54.1M44.1 10.5L39.0 5.6M64.1 87.6L59.7 98.9M92.3 76.1L94.7 82.5M142.0 45.4L150.3 45.4M2.2 13.6L-18.0 5.4M17.4 48.7L9.3 49.2M91.1 55.7L92.1 56.7M75.5 23.9L75.2 22.4M88.2 21.4L89.0 19.1M112.9 30.6L118.2 28.3M76.5 53.0L75.6 54.7M56.4 72.1L54.8 73.8M112.5 19.4L114.7 17.6M85.0 54.0L85.6 55.1M121.1 65.6L129.9 70.0M70.7 11.0L68.2 2.3M68.6 19.6L67.6 17.5M25.8 8.6L12.0 -0.6M160.7 79.6L176.9 86.6M87.8 20.7L88.9 17.3M121.9 29.1L130.5 25.8M46.5 26.5L38.2 22.0M66.1 49.9L63.7 50.7M60.8 57.3L55.7 60.4M32.6 56.6L23.2 58.8M111.8 43.0L116.1 42.7M19.4 92.6L15.5 95.7M84.1 23.5L84.6 19.9M58.1 44.0L54.0 43.8M70.3 43.0L69.2 42.8M148.6 30.3L164.5 26.9M65.8 53.5L63.9 54.6M83.8 64.2L84.3 67.0M130.2 47.8L143.3 48.5M80.8 31.2L80.9 29.9M71.6 33.9L69.4 31.2M42.1 82.1L36.5 87.4M60.4 38.7L58.5 38.2M140.7 27.0L155.9 22.5M28.1 76.1L15.9 83.3M93.7 87.4L94.8 91.1M122.9 39.8L131.6 38.7M113.1 69.4L120.9 75.2M87.1 26.9L88.7 22.5M79.6 84.5L79.5 88.7M43.1 48.6L38.8 49.0M150.5 6.1L157.7 2.1M122.8 27.2L132.3 23.2M17.2 42.8L9.3 42.5M90.8 34.3L93.1 31.9M157.6 5.9L177.0 -3.9M105.5 1.8L108.5 -3.5M63.5 74.7L60.1 80.6M45.0 39.9L36.3 38.6M150.2 82.5L157.2 86.3M69.3 55.5L66.2 58.3M120.5 26.6L130.7 21.9M106.5 57.5L109.9 59.2M96.9 39.3L98.9 38.7M158.6 57.1L169.2 58.7M94.9 68.6L98.0 73.8M49.0 0.1L46.2 -4.0M42.6 85.6L35.6 93.2M27.4 75.5L19.5 80.1M73.9 71.6L72.5 77.4M58.0 32.0L52.0 28.5M76.5 48.8L75.5 49.7M19.1 14.1L10.0 9.5M71.1 33.0L69.0 30.3M32.7 47.4L26.6 47.7M39.1 40.9L34.5 40.4M158.3 26.4L167.6 24.1M26.3 32.7L14.8 30.1M152.3 66.6L157.7 68.2M124.1 39.5L133.2 38.3M123.6 32.0L132.9 29.2M80.5 73.1L80.6 75.5M20.0 16.5L3.9 9.0M101.9 84.8L106.3 93.0M58.6 70.1L53.9 75.4M146.3 38.7L162.0 37.2M87.9 50.5L89.7 51.8M38.6 28.0L33.1 25.8M71.0 80.1L70.4 82.2M1.2 28.3L-18.1 24.2M112.7 48.6L119.1 49.4M62.1 37.9L58.3 36.4M91.0 48.9L93.7 50.0M96.4 13.2L99.7 6.4M107.1 56.7L110.0 57.9M32.8 47.4L24.8 47.8M91.9 22.8L92.9 20.7M90.6 39.2L91.6 38.5M111.2 83.9L116.5 90.7M83.4 30.3L84.0 27.2M-1.2 73.0L-22.7 80.3M98.1 20.4L101.3 16.0M85.9 45.0L86.6 45.0M43.8 64.9L38.7 67.7M15.7 13.3L-1.2 5.1M65.9 60.2L62.9 63.3M81.9 55.4L82.0 56.7M21.9 41.5L18.3 41.3M69.8 36.7L66.8 34.4M41.0 52.4L30.9 54.3M83.9 33.4L84.5 31.1M59.4 49.9L57.6 50.3M28.0 90.7L22.6 95.4M65.1 89.7L64.0 93.1M112.8 13.7L117.9 8.9M66.9 71.2L65.8 73.4M17.3 64.1L9.8 66.4M157.5 4.2L170.8 -2.8M87.0 27.8L88.3 24.5M45.4 30.0L37.5 26.6M62.6 39.5L57.9 38.0M55.4 1.3L51.3 -5.8M45.5 53.4L38.4 55.2M109.4 33.0L111.7 32.0M58.1 48.7L55.0 49.2M10.4 65.3L-3.9 69.5M159.8 14.9L164.0 13.3M105.8 4.7L108.0 1.1M85.0 28.0L85.5 26.1M142.0 21.8L156.0 16.5M33.4 30.9L25.2 28.4M53.7 70.9L52.0 72.6M24.2 65.8L21.2 66.9M34.1 52.3L22.0 54.2M76.8 4.4L75.8 -5.6M135.4 56.7L142.1 58.2M45.1 57.6L37.9 60.1M150.8 -1.3L157.6 -5.7M13.1 62.4L0.9 65.6M121.7 42.9L124.0 42.7M71.9 58.7L70.1 61.6M50.7 68.1L44.6 72.9M120.6 48.6L130.6 49.5M145.4 75.5L152.1 78.7M88.7 28.6L90.3 25.4M29.1 76.0L23.5 79.4M145.3 37.6L149.3 37.1M70.9 77.3L69.9 80.7M93.7 36.7L95.5 35.5M70.0 28.9L68.1 26.0M150.3 21.3L157.0 19.0M42.4 49.4L35.7 50.1M63.0 -2.6L61.9 -5.4M82.1 51.0L82.3 51.8M132.8 90.9L136.9 94.4M55.8 44.1L51.2 43.9M59.9 58.5L56.5 60.6M93.0 56.7L95.0 58.6M20.3 9.5L9.1 2.8M141.8 22.3L148.3 19.9M33.9 26.9L22.0 22.3M79.8 6.8L79.7 -0.3M89.6 52.8L91.5 54.5M142.9 18.1L153.9 13.4M53.5 53.0L47.3 54.9M85.8 82.7L86.3 86.4M12.2 23.6L0.6 19.9M63.7 65.9L59.4 71.2M0.0 58.6L-17.9 61.6M141.6 36.1L149.0 35.0M79.7 26.3L79.4 21.0M159.3 72.1L167.7 75.0M107.1 48.3L108.7 48.5M134.5 43.8L143.2 43.6M140.6 80.5L144.8 83.0M133.5 76.0L138.4 78.8M88.3 10.7L90.1 3.0M104.5 67.0L106.5 68.9M157.1 51.1L171.8 52.3M32.8 8.7L28.6 5.4" stroke="#1b4a5e" stroke-width="0.45" fill="none" opacity=".8"/><path d="M20.5 63.5L5.4 68.2M15.5 41.8L9.7 41.5M74.4 62.5L72.9 66.7M81.0 55.6L81.1 57.6M111.9 45.1L119.9 45.1M129.1 39.0L132.3 38.6M75.8 60.7L75.4 62.1M19.3 14.9L11.3 10.9M35.3 11.6L30.8 8.3M-2.6 76.7L-12.4 80.5M156.1 -0.2L165.9 -6.1M82.8 36.4L83.1 35.3M88.7 55.0L90.5 57.2M151.0 26.2L157.4 24.5M96.7 78.8L98.7 83.2M13.7 36.4L-0.5 34.5M149.7 13.8L154.9 11.5M22.7 67.5L10.1 72.4M97.5 39.4L99.5 38.7M17.3 35.3L11.5 34.4M31.5 40.1L20.4 38.9M7.2 49.1L2.7 49.4M4.5 78.7L-14.1 86.9M86.1 23.2L86.9 19.9M89.6 52.2L91.5 53.7M92.8 53.4L96.3 55.8M84.4 2.6L85.0 -4.0M20.6 73.2L17.5 74.6M55.7 61.8L53.4 63.3M77.8 29.2L77.4 26.9M125.6 48.0L134.3 48.6M33.3 35.0L20.5 32.3M69.6 52.8L68.2 53.7M109.4 65.5L116.7 70.8M110.2 91.8L112.8 95.8M69.4 35.7L66.3 33.0M105.4 51.9L111.1 53.4M95.9 39.4L100.1 37.9M63.5 32.1L60.1 29.5M36.2 19.8L26.4 14.3M48.3 12.8L44.7 9.2M19.8 75.8L15.6 78.0M96.6 52.9L100.1 54.6M100.0 54.8L104.7 57.2M92.5 33.0L93.6 31.9M66.1 61.1L62.9 64.6M161.2 -0.3L181.1 -11.5M93.8 6.7L95.4 2.0M162.3 9.4L170.5 5.8M50.0 79.3L45.8 84.1M139.1 53.2L148.9 54.6M64.2 26.7L60.5 22.6M81.4 77.4L81.6 84.7M151.0 30.7L162.0 28.5M61.3 64.1L59.3 66.0M86.9 58.5L88.1 60.9M87.4 78.2L88.9 85.3M95.7 -0.4L98.2 -8.0M81.1 52.4L81.2 54.0M74.3 60.5L73.4 62.6M75.5 2.4L74.2 -8.6M101.6 89.7L106.5 100.2M66.9 54.0L63.2 56.5M131.1 10.1L139.8 4.2M5.0 7.4L-1.5 4.1M146.3 18.7L153.8 15.7M32.4 86.7L28.3 90.3M144.5 28.3L154.2 25.8M22.5 70.5L8.2 76.8M16.5 0.0L9.2 -5.1M100.8 54.5L104.0 56.0M69.6 53.2L67.1 55.1M162.7 82.7L183.9 92.4M146.8 92.2L151.6 95.7M104.4 26.9L110.1 22.6M85.8 84.9L87.1 95.1M132.9 39.4L141.6 38.5M52.2 45.0L47.1 45.0M22.5 38.9L8.9 37.4M29.9 17.1L27.1 15.6M91.3 68.0L92.0 69.4M161.4 84.7L175.2 91.4M120.5 55.9L128.0 57.9M77.2 11.8L76.8 8.1M51.9 77.8L44.3 86.6M5.9 -2.7L-5.0 -9.8M88.1 40.0L89.3 39.2M70.7 10.0L68.6 2.5M68.1 31.4L66.1 29.2M124.9 62.6L130.3 64.8M75.6 70.6L74.9 74.4M16.0 8.1L5.2 1.9M69.0 52.9L66.8 54.4M14.4 57.9L-2.6 61.3M-1.8 2.3L-19.5 -6.9M90.4 38.7L91.5 38.0M10.4 47.8L-1.4 48.3M162.2 26.2L168.8 24.6M80.7 87.4L80.7 91.3M87.6 23.7L88.6 20.6M83.9 73.6L84.1 75.3M61.0 -2.0L57.4 -10.9M75.7 53.8L74.6 55.6M128.4 39.2L138.1 38.1M53.9 18.3L51.2 15.6M69.1 53.7L66.8 55.5M51.2 29.6L47.0 27.5M49.9 86.9L48.3 89.1M81.0 24.5L81.2 18.7M61.2 36.2L56.4 34.1M12.1 65.7L2.6 68.6M69.7 44.0L67.2 43.7M100.4 22.6L102.8 19.9M136.4 72.8L148.8 79.0M76.3 15.2L75.4 9.1M124.1 49.2L129.3 49.7M90.1 65.6L92.2 70.1M95.3 60.5L99.2 64.7M61.7 68.4L56.6 74.9M76.6 -0.5L76.1 -5.9M101.8 -0.2L105.0 -7.0M124.5 25.5L133.9 21.4M148.6 55.0L158.8 56.5M39.9 54.1L31.8 55.9M124.8 51.8L132.3 52.9M117.8 24.1L123.8 20.8M45.6 83.2L40.2 89.1M136.2 67.8L145.6 71.6M47.2 48.4L39.9 49.1M42.6 18.2L38.2 15.0M45.4 22.9L39.7 19.3M112.0 6.9L115.6 2.6M36.4 1.1L25.3 -10.0M74.8 41.9L73.3 41.0M119.4 5.4L121.6 3.2M141.7 92.6L146.7 96.5M30.5 12.7L23.8 8.3M105.4 7.0L109.9 0.1M79.8 60.2L79.7 64.1M77.2 80.1L77.1 82.2M6.6 24.1L-5.6 20.7M100.2 38.6L105.6 36.8M161.2 84.1L166.7 86.8M143.2 56.8L159.7 59.9M133.7 73.0L138.4 75.5M31.3 73.1L28.1 75.0M107.1 75.1L110.4 78.9M15.3 49.2L2.3 50.1M91.2 46.6L94.1 47.1M159.8 52.5L168.1 53.2M37.7 37.9L29.1 36.5M-1.9 57.6L-6.0 58.2M70.5 71.8L69.6 74.1M19.0 29.1L5.8 25.7M54.2 44.4L50.8 44.3M16.2 61.6L1.2 65.5M112.6 49.0L120.1 49.9M76.4 56.5L75.8 58.1M140.5 86.9L147.9 92.0M24.6 72.9L10.3 80.1M41.5 49.4L32.2 50.4M125.1 -0.4L136.5 -12.0M73.0 59.1L72.4 60.3M37.7 70.5L33.4 73.1M101.9 39.4L105.2 38.5M30.4 59.0L26.7 60.0M114.1 61.1L121.0 64.4M23.0 85.1L11.6 93.1M72.1 46.4L71.1 46.6M36.8 59.7L30.3 61.9M61.7 17.9L57.5 11.8M11.9 84.9L4.8 89.0M8.0 3.4L-8.7 -6.2M49.3 28.1L42.7 24.6M60.2 11.6L55.6 3.9M102.9 3.2L105.4 -1.4M71.1 42.8L69.4 42.4M100.5 20.6L104.7 15.5M123.3 35.2L129.7 33.8M75.5 30.8L74.2 27.2M64.0 35.5L62.8 34.8M35.7 82.1L28.9 87.7M88.4 44.7L89.5 44.6M7.9 76.2L-5.0 81.7M65.8 16.5L63.5 12.1M83.6 55.1L84.0 56.3M92.0 40.1L94.3 39.0M87.8 36.7L88.7 35.6M91.6 51.7L94.5 53.5M88.1 64.6L88.9 66.7M93.9 68.6L96.2 72.8M38.1 81.0L35.6 83.1M112.7 80.2L119.4 87.5M149.7 75.1L156.4 78.0M136.2 48.8L142.2 49.2M96.7 -0.9L100.8 -12.6M127.6 59.1L130.8 60.1M95.2 65.3L97.4 68.5M146.9 73.4L153.1 76.1M88.3 15.0L88.9 13.0M62.5 30.9L58.6 27.9M52.5 7.3L48.6 2.0M40.9 66.5L30.4 72.1M46.7 1.0L39.2 -8.7M5.7 37.7L-9.2 36.3M100.1 67.9L103.5 71.9M30.5 65.9L22.9 69.0M58.0 35.0L56.4 34.2M73.6 53.5L72.9 54.3M52.6 75.2L50.3 77.7M87.9 24.3L88.9 21.6M117.3 57.1L121.6 58.5M82.6 59.9L82.8 61.2M152.2 52.6L160.9 53.5M74.2 65.3L73.7 66.8M89.1 34.4L91.2 31.8M57.8 35.5L52.7 33.4M78.8 30.3L78.3 26.2M55.4 88.4L51.5 95.0M10.2 33.8L1.9 32.5M12.3 68.6L-0.9 73.2M142.0 0.3L155.7 -9.6M60.9 38.9L59.6 38.5M81.6 78.1L81.7 81.5M63.8 90.8L62.5 94.4M20.8 49.3L14.4 49.8M160.4 39.6L166.8 39.2M43.4 42.6L33.4 41.9M27.3 46.2L24.3 46.3M138.7 59.6L153.4 63.3M114.7 16.3L122.3 9.9M136.9 55.2L144.8 56.7M120.0 32.5L129.2 29.6M151.1 68.1L158.1 70.4M134.8 16.6L138.1 14.9M113.4 14.2L115.7 12.1M159.2 11.0L178.1 2.9M106.9 75.7L109.1 78.3M67.4 50.1L64.1 51.3M98.1 26.5L99.3 25.3M82.7 8.9L83.2 0.1M115.0 17.1L124.0 9.9M34.3 88.8L29.6 93.3M23.7 27.7L13.4 24.6M117.8 32.0L124.5 29.7M133.0 73.7L137.5 76.2M25.4 4.9L17.0 -1.3M67.0 57.0L66.0 57.8M9.2 75.2L-3.6 80.6M135.7 34.4L140.4 33.5M125.3 15.9L133.8 10.4M126.6 85.2L133.6 91.3M143.9 26.4L150.7 24.5M89.2 35.5L91.1 33.3M74.3 70.4L73.6 73.2M22.1 76.2L15.8 79.5M116.5 6.7L121.5 1.4M141.4 6.5L147.5 2.7M59.9 47.6L54.4 48.3M82.1 74.1L82.3 78.9M121.0 87.2L124.6 91.0M64.6 6.5L62.0 -0.0M38.0 15.2L29.5 9.2M3.9 54.7L-2.3 55.5M13.6 62.1L2.1 65.0" stroke="#2a6f8c" stroke-width="0.4" fill="none" opacity=".8"/><path d="M152.3 78.9L161.9 83.4M30.8 25.6L26.3 23.8M87.7 53.7L88.3 54.5M97.1 44.9L100.3 44.9M142.9 -0.2L155.5 -9.3M119.1 22.2L126.9 17.5M115.5 8.3L123.3 0.1M70.9 66.6L69.3 70.3M64.7 49.9L63.5 50.2M83.7 51.7L84.4 53.1M12.0 60.9L5.7 62.4M161.8 59.7L166.7 60.6M115.7 92.6L123.0 102.5M62.5 89.0L58.3 99.4M101.4 18.6L106.0 12.9M110.8 48.4L117.0 49.1M101.4 40.8L105.1 40.0M96.4 21.4L98.9 17.7M92.7 11.0L95.8 2.3M82.0 66.1L82.4 71.6M20.4 19.0L9.2 14.2M7.8 51.9L-0.4 52.7M75.5 68.9L74.8 72.2M9.4 89.7L-4.3 98.3M147.5 26.8L158.4 23.9M72.9 64.9L71.3 69.0M82.4 3.8L82.8 -3.3M44.4 49.7L35.5 50.8M81.2 39.6L81.4 37.9M88.2 29.3L89.1 27.3M6.6 0.3L-1.7 -4.7M1.8 90.3L-3.4 93.2M37.5 78.7L26.3 87.5M76.1 38.6L75.3 37.4M92.5 59.6L95.1 62.8M10.7 39.9L-4.3 38.8M20.3 88.3L4.5 99.7M38.4 85.8L29.0 94.8M60.6 28.2L56.0 24.4M76.8 -2.4L76.2 -11.0M152.2 70.7L169.8 76.9M73.7 58.4L71.9 62.0M90.3 35.9L91.2 34.9M86.4 27.9L87.2 25.7M6.2 74.2L-10.2 80.6M32.0 66.1L26.8 68.4M92.6 42.7L94.9 42.3M105.0 42.9L108.9 42.5M122.5 27.3L131.8 23.4M157.0 89.0L165.9 94.2M99.1 69.7L101.3 72.6M148.3 55.5L159.9 57.3M74.6 24.8L73.6 21.5M54.2 48.2L47.6 49.0M114.2 56.8L119.8 58.7M21.7 92.2L15.7 97.1M60.4 83.3L56.0 91.7M51.8 74.3L45.3 80.9M70.3 92.4L68.4 101.2M118.5 3.1L123.8 -2.7M53.3 18.5L46.3 11.6M133.4 43.1L145.8 42.7M140.5 49.2L154.1 50.1M51.3 10.6L48.0 6.7M72.3 62.0L71.1 64.4M112.0 37.5L116.5 36.4M60.9 20.1L57.2 15.4M137.5 41.4L143.2 41.1M123.7 55.2L134.1 57.6M101.6 64.2L104.6 66.9M111.5 42.6L117.5 42.2M41.9 66.0L32.9 70.9M28.6 11.7L24.9 9.4M119.5 69.2L124.7 72.5M130.5 76.0L136.2 79.5M-2.6 66.7L-8.3 68.2M74.1 48.9L73.2 49.4M31.9 67.7L29.0 69.1M60.8 81.8L56.2 90.3M152.3 81.5L162.5 86.8M7.2 47.9L-2.5 48.3M26.0 60.6L20.5 62.1M67.9 67.0L64.5 72.9M45.3 90.8L42.1 95.0M16.5 37.0L2.8 35.3M101.5 73.9L104.8 78.5M85.0 85.0L85.5 90.0M62.6 60.4L58.4 64.0M109.4 27.6L116.9 23.1M90.9 12.8L93.4 5.2M64.0 70.1L62.3 72.7M138.7 53.4L146.0 54.5M148.2 38.6L153.3 38.1M161.8 76.3L179.3 83.1M24.3 37.0L21.1 36.5M116.2 82.0L122.5 88.5M60.7 49.0L55.2 50.1M110.0 72.7L113.0 75.5M30.5 42.2L23.6 41.8M17.2 4.6L3.6 -4.0M53.5 45.8L48.2 46.0M6.9 50.0L3.0 50.3M39.7 51.8L33.6 52.8M49.4 24.7L47.0 23.1M22.8 56.4L16.0 57.7M120.3 50.6L122.7 50.9M52.3 18.4L49.6 15.9M23.6 29.0L17.0 27.2M121.1 34.0L125.6 32.8M68.5 66.9L66.2 71.1M95.6 85.7L96.4 87.9M72.0 83.5L70.2 91.9M129.7 56.1L134.1 57.1M89.8 51.6L91.5 52.8M58.2 40.5L53.8 39.6M68.3 63.2L65.7 67.0M127.0 3.5L135.2 -3.9M23.6 -0.3L8.5 -12.3M96.4 62.5L100.5 67.0M148.9 61.3L159.2 63.7M49.5 16.6L43.0 10.6M54.1 88.6L48.7 97.5M53.5 9.1L50.0 4.5M79.1 34.5L78.8 32.1M1.7 3.0L-18.5 -7.8M159.4 52.5L167.1 53.3M37.4 58.4L30.7 60.5M17.5 31.6L7.2 29.4M86.9 7.8L87.4 5.1M113.4 53.8L117.0 54.8M154.8 31.5L165.9 29.5M156.4 6.5L174.0 -2.5M65.4 38.3L61.9 36.7M87.0 34.4L87.7 33.4M147.5 51.2L160.1 52.3M45.5 15.2L43.7 13.7M121.4 62.8L126.1 64.9M84.5 30.8L85.5 26.9M82.5 50.1L83.2 51.8M88.9 51.3L90.7 52.7M3.4 74.6L-4.6 77.7M142.8 46.4L153.2 46.6M22.6 6.3L9.7 -2.4M89.9 88.3L90.5 91.1M1.5 81.5L-19.0 90.9M63.8 49.1L61.1 49.8M55.8 36.4L52.8 35.3M82.8 53.0L83.1 53.9M145.3 92.1L150.4 95.8M73.9 90.5L72.2 102.1M126.1 53.0L132.7 54.2M82.5 67.2L82.8 70.7M147.1 34.3L158.3 32.5M69.3 90.4L67.7 97.0M103.8 83.8L107.3 89.5M23.1 65.7L11.4 69.9M22.1 51.8L17.3 52.4M82.1 29.4L82.3 27.5M84.2 11.4L84.8 5.8M8.3 90.2L-3.5 97.5" stroke="#3a8fb3" stroke-width="0.35" fill="none" opacity=".8"/><path d="M52.7 60.1L49.5 61.9M62.9 54.5L61.6 55.2M67.2 34.1L64.4 31.8M39.0 46.6L29.2 47.0M0.6 8.1L-17.1 -0.0M13.9 43.7L10.4 43.6M68.4 71.9L66.1 77.1M114.6 21.1L118.7 18.2M25.9 82.3L17.3 88.2M16.0 -0.3L12.4 -2.9M142.9 -1.8L146.4 -4.5M93.5 77.8L97.0 86.6M97.6 1.8L100.9 -6.6M48.2 48.5L46.1 48.8M120.8 1.7L128.4 -6.5M126.5 77.2L133.5 82.1M90.1 50.0L91.4 50.6M49.9 50.3L46.2 51.0M53.4 49.7L46.6 50.9M75.1 22.1L73.9 17.2M4.6 63.7L-5.3 66.1M95.6 78.3L97.8 82.9M120.0 38.9L127.9 37.7M73.1 44.3L72.0 44.2M45.9 69.0L40.0 73.1M97.0 78.8L100.3 85.6M67.9 70.8L66.2 74.3M59.0 6.4L53.7 -3.2M24.6 82.2L11.4 91.1M36.0 58.6L26.6 61.5M96.2 45.1L100.1 45.1M65.3 60.7L63.4 62.7M100.1 27.1L103.4 24.0M24.2 45.9L13.5 46.1M96.5 7.9L98.2 3.9M15.6 50.5L8.0 51.1M78.2 5.3L77.8 -3.1M88.6 3.4L90.3 -5.4M105.0 78.1L111.0 86.2M-2.8 16.3L-24.7 8.7M88.9 30.8L90.0 29.0M67.2 29.0L64.7 26.0M151.4 79.9L159.9 84.1M39.2 19.6L32.2 15.3M111.0 10.8L116.6 4.5M132.0 6.6L144.5 -2.8M35.5 78.6L29.8 82.8M70.3 32.2L67.5 28.6M49.9 79.9L47.2 83.0M122.4 72.5L125.9 74.9M88.5 55.3L89.4 56.4M61.5 62.9L56.9 67.2M109.8 23.0L112.1 21.4M122.9 48.0L128.4 48.4M7.8 83.2L-1.0 87.8M33.3 -1.8L29.6 -5.4M144.5 65.4L156.2 69.2M107.7 42.3L113.6 41.7M69.2 34.9L66.8 32.6M75.0 16.7L73.5 9.1M74.1 18.5L73.0 13.9M153.9 90.8L157.3 92.9M19.3 36.1L8.8 34.6M44.9 46.8L40.7 47.0" stroke="#62b6d8" stroke-width="0.3" fill="none" opacity=".8"/></symbol></defs></svg>
<div id="thumbs" class="bl"><span class="t " style="left:7.0px;top:5.6px;font-size:8px;color:#444">1</span><div style="position:absolute;left:19.0px;top:8.0px;width:69.4px;height:39.2px;background:#fff;border-radius:2px;box-shadow:0 0 0 .6px #cfcfcf,0 .6px 1px rgba(0,0,0,.18);overflow:hidden"><div style="position:absolute;left:0;top:0;width:8px;height:100%;background:linear-gradient(#5c93c4 0,#4d83b6 18%,#3a6a97 26%,#23425f 34%,#0d1a26 42%,#0a141d 52%,#1b3650 58%,#2a5278 66%,#21466a 74%,#3f74a5 86%,#3a6c9c 100%)"></div></div><span class="t " style="left:6.6px;top:55.4px;font-size:8px;color:#444">2</span><svg class="ic" style="left:6.0px;top:65.6px" width="5.2" height="4" viewBox="0 0 5.2 4" ><path d="M2.6 .2V3.8M.6 1L4.6 3M4.6 1L.6 3" stroke="#555" stroke-width=".7"/></svg><div style="position:absolute;left:19.0px;top:57.4px;width:69.4px;height:39.2px;background:#fff;border-radius:2px;box-shadow:0 0 0 .6px #cfcfcf,0 .6px 1px rgba(0,0,0,.18);overflow:hidden"><div style="position:absolute;right:0;top:0;width:6.6px;height:100%;background:linear-gradient(#4f86b8 0,#3a6d9c 6%,#05101a 12%,#020910 50%,#0a1a28 54%,#030b13 58%,#061421 84%,#3d74a6 90%,#4a82b4 100%)"></div></div><span class="t " style="left:6.8px;top:104.8px;font-size:8px;color:#c9683a">3</span><div style="position:absolute;left:17.1px;top:105.0px;width:73.2px;height:43.0px;border:2px solid #c8693c;border-radius:4px;background:#0a0c0e;overflow:hidden"><svg style="position:absolute;left:0;top:0" width="69.8" height="39.6"><use href="#sb" width="69.8" height="39.6"/></svg><div style="position:absolute;left:35.2px;top:2.6px;width:1.4px;height:34px;background:repeating-linear-gradient(#9aa0a4 0,#9aa0a4 1.6px,transparent 1.6px,transparent 3.4px);opacity:.5"></div><span class="t" style="left:40.6px;top:5.6px;font-size:13px;font-weight:bold;color:#a4a6a8;line-height:15.8px;transform:scaleX(1.1);transform-origin:0 0">0<br>1<br>2</span></div></div>
<div id="canvas"><div style="position:absolute;left:-0.3px;top:0.0px;width:1.0px;height:436.0px;background:#eaeaea"></div><svg class="ic bl" style="left:346.3px;top:34.9px" width="160.5" height="90"><use href="#sb" width="160.5" height="90"/></svg><div class="t bl" title="digits" style="left:419.6px;top:44.6px;width:56px;text-align:center;font-size:33px;font-weight:bold;color:#fff;line-height:36.65px;transform:scaleX(1.04)">0<br>1<br>2<br>3<br>4<br>5<br>6<br>7<br>8<br>9</div><svg class="ic" style="left:411.5px;top:10.9px" width="72.2" height="424" viewBox="0 0 72.2 424" ><path d="M8 24H64V418.6H8Z" fill="none" stroke="#8e8e8e" stroke-width=".7"/><path d="M8 418.6H64" stroke="#858585" stroke-width=".9"/><path d="M36.2 11V24" stroke="#9a9a9a" stroke-width=".6"/><circle cx="36.2" cy="6.5" r="3.65" fill="none" stroke="#8a8a8a" stroke-width="2.5"/><circle cx="36.2" cy="6.5" r="3.65" fill="none" stroke="#f4f4f4" stroke-width="1.5"/><path d="M38.6 6.2L40.6 4.6L43.6 5.6L41.4 8.6Z" fill="#f0f0f0" stroke="#8a8a8a" stroke-width=".5"/><circle cx="8" cy="24" r="2.35" fill="#fff" stroke="#757575" stroke-width=".7"/><circle cx="36.1" cy="24" r="2.35" fill="#fff" stroke="#757575" stroke-width=".7"/><circle cx="64" cy="24" r="2.35" fill="#fff" stroke="#757575" stroke-width=".7"/><circle cx="8" cy="221.3" r="2.35" fill="#fff" stroke="#757575" stroke-width=".7"/><circle cx="64" cy="221.3" r="2.35" fill="#fff" stroke="#757575" stroke-width=".7"/><circle cx="8" cy="418.6" r="2.35" fill="#fff" stroke="#757575" stroke-width=".7"/><circle cx="36.1" cy="418.6" r="2.35" fill="#fff" stroke="#757575" stroke-width=".7"/><circle cx="64" cy="418.6" r="2.35" fill="#fff" stroke="#757575" stroke-width=".7"/></svg><div style="position:absolute;left:436.4px;top:155.0px;width:40.0px;height:40.0px;border-radius:50%;background:rgba(255,122,96,.36);filter:blur(.4px)"></div><svg style="left:453.0px;top:172.0px" width="10" height="13.4" viewBox="0 0 10 13.4" class="ic bl"><path d="M3.7 .4V6.6M.4 3.6H7" stroke="#777" stroke-width=".6"/><path d="M3.7 0L4.6 1.1H2.8ZM0 3.6L1.1 2.7V4.5ZM7.4 3.6L6.3 2.7V4.5Z" fill="#1a1a1a" stroke="#1a1a1a" stroke-width=".4"/><path d="M3.5 3.2V11L5.3 9.4L6.8 12.6L8.2 12L6.7 8.9H9Z" fill="#fff" stroke="#3a3a3a" stroke-width=".55"/></svg></div>
<div id="vscroll" class="bl"><div style="position:absolute;left:0.0px;top:0.0px;width:7.0px;height:5.6px;background:#fff"></div><svg class="ic" style="left:1.8px;top:1.8px" width="3.4" height="2.2" viewBox="0 0 3.4 2.2" ><path d="M0 2.2L1.7 0L3.4 2.2Z" fill="#555"/></svg><div style="position:absolute;left:0.0px;top:5.6px;width:7.0px;height:262.4px;background:#e4e4e4"></div><div style="position:absolute;left:0.0px;top:268.0px;width:7.0px;height:132.6px;background:#fff"></div><div style="position:absolute;left:0.0px;top:400.6px;width:7.0px;height:6.0px;background:#fff;border-top:.6px solid #ddd"></div><svg class="ic" style="left:1.8px;top:402.8px" width="3.4" height="2.2" viewBox="0 0 3.4 2.2" ><path d="M0 0L1.7 2.2L3.4 0Z" fill="#555"/></svg><svg class="ic" style="left:1.4px;top:409.6px" width="4.2" height="4.4" viewBox="0 0 4.2 4.4" ><path d="M.4 4H3.8M.6 2.4L2.1 1L3.6 2.4M.6 1.6L2.1 .2L3.6 1.6" fill="none" stroke="#555" stroke-width=".6"/></svg><svg class="ic" style="left:1.4px;top:418.6px" width="4.2" height="4.4" viewBox="0 0 4.2 4.4" ><path d="M.4 .4H3.8M.6 2L2.1 3.4L3.6 2M.6 2.8L2.1 4.2L3.6 2.8" fill="none" stroke="#555" stroke-width=".6"/></svg></div>
<div id="status" class="bl"><span class="t bd" style="left:5.0px;top:4.0px;font-size:6px;color:#333" title="幻灯片"><i class="k b"></i><i class="k e"></i><i class="k h"></i></span><span class="t bd" style="left:24.7px;top:4.0px;font-size:6px;color:#333" title="第"><i class="k c"></i></span><svg class="ic" style="left:32.6px;top:3.8px" width="3.8" height="7.8"><text x="0" y="5.33" textLength="2.8" lengthAdjust="spacingAndGlyphs" font-size="6.2" font-weight="normal" fill="#555" >3</text></svg><span class="t bd" style="left:37.5px;top:4.0px;font-size:6px;color:#333" title="张"><i class="k f"></i></span><svg class="ic" style="left:44.4px;top:3.8px" width="2.2" height="7.8"><text x="0" y="5.33" textLength="1.2" lengthAdjust="spacingAndGlyphs" font-size="6.2" font-weight="normal" fill="#555" >,</text></svg><span class="t bd" style="left:49.4px;top:4.0px;font-size:6px;color:#333" title="共"><i class="k a"></i></span><svg class="ic" style="left:57.6px;top:3.8px" width="3.8" height="7.8"><text x="0" y="5.33" textLength="2.8" lengthAdjust="spacingAndGlyphs" font-size="6.2" font-weight="normal" fill="#555" >3</text></svg><span class="t bd" style="left:62.5px;top:4.0px;font-size:6px;color:#333" title="张"><i class="k d"></i></span><svg class="ic" style="left:79.6px;top:4.2px" width="6.4" height="5.6" viewBox="0 0 6.4 5.6" ><path d="M.4 .6H4.6V5H.4Z" fill="none" stroke="#666" stroke-width=".6"/><path d="M5.2 1.4L6.2 3L5.2 4.8" fill="none" stroke="#666" stroke-width=".6"/></svg><span class="t bd" style="left:94.4px;top:4.0px;font-size:5.8px;color:#333" title="中文(中国)"><i class="k g"></i><i class="k b"></i><span style="font-size:5.4px;color:#555">(</span><i class="k e"></i><i class="k h"></i><span style="font-size:5.4px;color:#555">)</span></span><svg class="ic" style="left:131.0px;top:3.6px" width="5.6" height="6.4" viewBox="0 0 5.6 6.4" ><circle cx="2.8" cy="1" r=".8" fill="#555"/><path d="M.4 2.4H5.2M2.8 2.4V4.2M2.8 4.2L1.4 6.2M2.8 4.2L4.2 6.2" fill="none" stroke="#555" stroke-width=".6"/></svg><span class="t bd" style="left:139.4px;top:4.0px;font-size:5.8px;color:#333" title="辅助功能: 调查"><i class="k c"></i><i class="k f"></i><i class="k a"></i><i class="k d"></i><span style="font-size:5.4px">: </span><i class="k g"></i><i class="k b"></i></span><svg class="ic" style="left:745.6px;top:4.0px" width="7.4" height="6" viewBox="0 0 7.4 6" ><path d="M0 1.4H7.4M0 3.4H7.4M0 5.4H7.4" stroke="#444" stroke-width=".7"/><path d="M2.6 1.2L3.7 .1L4.8 1.2" fill="none" stroke="#444" stroke-width=".6"/></svg><span class="t bd" style="left:755.0px;top:4.0px;font-size:5.8px;color:#333" title="备注"><i class="k e"></i><i class="k h"></i></span><div style="position:absolute;left:777.0px;top:1.8px;width:15.4px;height:10.2px;background:#e2e2e2"></div><svg class="ic" style="left:782.6px;top:4.0px" width="7" height="5.8" viewBox="0 0 7 5.8" ><rect x=".4" y=".4" width="6.2" height="5" fill="none" stroke="#333" stroke-width=".8"/><rect x="3" y="1.8" width="2.4" height="2.2" fill="#333"/></svg><svg class="ic" style="left:802.6px;top:4.2px" width="7" height="5.6" viewBox="0 0 7 5.6" ><rect x="0" y="0" width="2.6" height="2" fill="#555"/><rect x="3.8" y="0" width="2.6" height="2" fill="#555"/><rect x="0" y="3.4" width="2.6" height="2" fill="#555"/><rect x="3.8" y="3.4" width="2.6" height="2" fill="#555"/></svg><svg class="ic" style="left:822.6px;top:3.8px" width="7" height="6.4" viewBox="0 0 7 6.4" ><path d="M.4 .8C1.6 .2 2.6 .4 3.5 1C4.4 .4 5.4 .2 6.6 .8V5.8C5.4 5.2 4.4 5.4 3.5 6C2.6 5.4 1.6 5.2 .4 5.8Z" fill="none" stroke="#888" stroke-width=".6"/><path d="M3.5 1V6" stroke="#888" stroke-width=".5"/></svg><svg class="ic" style="left:842.4px;top:3.8px" width="7.4" height="6.6" viewBox="0 0 7.4 6.6" ><path d="M0 .5H7.4" stroke="#333" stroke-width=".9"/><rect x=".8" y=".8" width="5.8" height="3.4" fill="none" stroke="#333" stroke-width=".7"/><path d="M3.7 4.2V6M2.2 6.2H5.2" stroke="#333" stroke-width=".7"/></svg><svg class="ic" style="left:858.2px;top:6.4px" width="4" height="1.2" viewBox="0 0 4 1.2" ><path d="M0 .6H4" stroke="#333" stroke-width="1"/></svg><div style="position:absolute;left:868.0px;top:6.8px;width:47.0px;height:0.7px;background:#cfcfcf"></div><div style="position:absolute;left:890.6px;top:6.0px;width:0.8px;height:2.2px;background:#ccc"></div><div style="position:absolute;left:869.8px;top:4.0px;width:1.8px;height:6.4px;background:#555"></div><svg class="ic" style="left:917.2px;top:6.4px" width="4" height="1.2" viewBox="0 0 4 1.2" ><path d="M0 .6H4" stroke="#333" stroke-width="1"/></svg><svg class="ic" style="left:928.0px;top:4.0px" width="14.2" height="7.5"><text x="0" y="5.16" textLength="13.2" lengthAdjust="spacingAndGlyphs" font-size="6" font-weight="normal" fill="#555" >25%</text></svg><svg class="ic" style="left:950.0px;top:3.2px" width="7.6" height="7.6" viewBox="0 0 7.6 7.6" ><rect x="1.4" y="1.4" width="4.8" height="4.8" fill="none" stroke="#777" stroke-width=".6" stroke-dasharray="1.4 1"/><path d="M3.8 0V1.4M3.8 6.2V7.6M0 3.8H1.4M6.2 3.8H7.6" stroke="#555" stroke-width=".7"/></svg></div>
</body></html>
